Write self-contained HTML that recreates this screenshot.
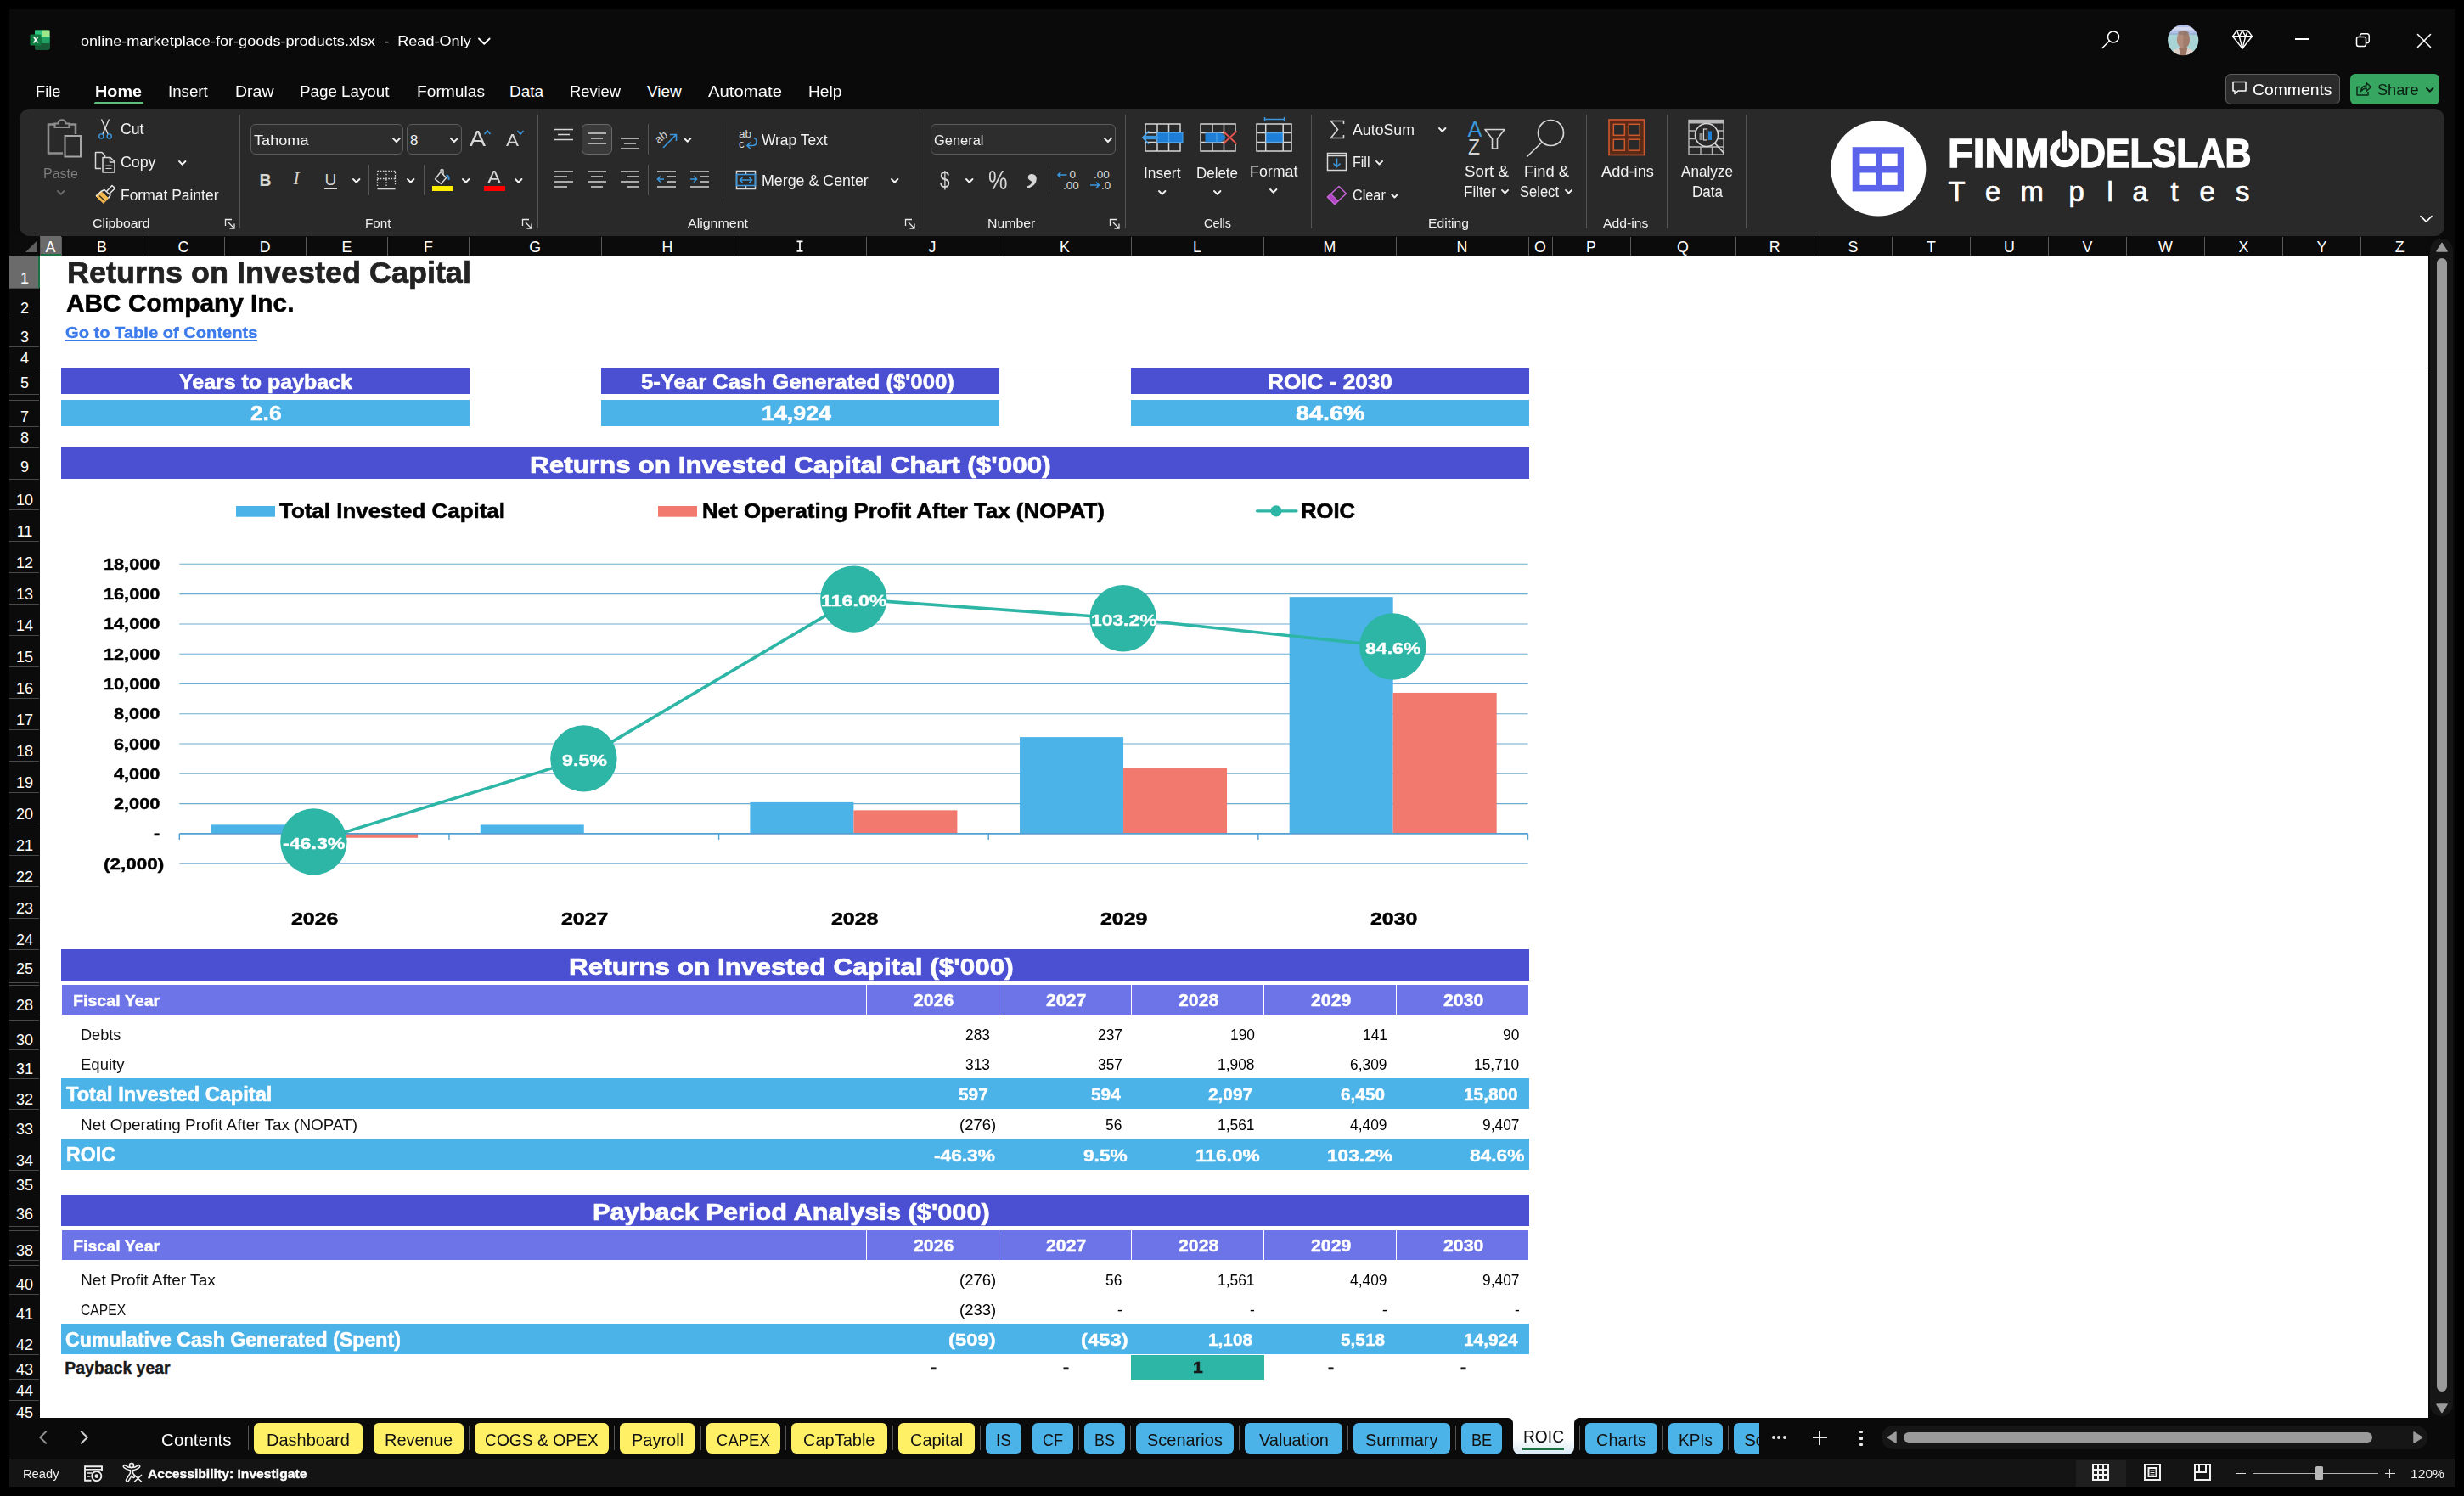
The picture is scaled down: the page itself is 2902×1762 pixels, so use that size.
<!DOCTYPE html>
<html><head><meta charset="utf-8"><title>ROIC</title>
<style>
html,body{margin:0;padding:0;background:#000;}
body{width:2902px;height:1762px;position:relative;overflow:hidden;font-family:"Liberation Sans",sans-serif;}
#win{position:absolute;left:11px;top:11px;width:2880px;height:1740px;background:#0a0a0a;}
.t{position:absolute;white-space:pre;transform-origin:0 0;}
.r{position:absolute;}
svg{overflow:visible}
</style></head><body><div id="win"></div>
<!-- sheet -->
<div class="r" style="left:47.0px;top:301.0px;width:2813.0px;height:1369.0px;background:#fff;"></div>
<div class="r" style="left:11.0px;top:278.0px;width:2849.0px;height:23.0px;background:#0b0b0b;"></div>
<svg class="r" style="left:28.0px;top:281.0px" width="18" height="18" viewBox="0 0 18 18"><path d="M16 2 L16 16 L2 16 Z" fill="#5f5f5f"/></svg>
<div class="r" style="left:47.0px;top:278.0px;width:25.0px;height:23.0px;background:#6b6b6b;"></div>
<div class="r" style="left:47.0px;top:299.0px;width:25.0px;height:2.0px;background:#1e7145;"></div>
<div class="r" style="left:71.5px;top:279.0px;width:1.0px;height:22.0px;background:#5a5a5a;"></div>
<span class="t" style="left:53.6px;top:282.8px;font-size:17.8px;line-height:17.8px;color:#fff;">A</span>
<div class="r" style="left:167.5px;top:279.0px;width:1.0px;height:22.0px;background:#5a5a5a;"></div>
<span class="t" style="left:114.1px;top:282.8px;font-size:17.8px;line-height:17.8px;color:#fff;">B</span>
<div class="r" style="left:263.5px;top:279.0px;width:1.0px;height:22.0px;background:#5a5a5a;"></div>
<span class="t" style="left:209.6px;top:282.8px;font-size:17.8px;line-height:17.8px;color:#fff;">C</span>
<div class="r" style="left:360.0px;top:279.0px;width:1.0px;height:22.0px;background:#5a5a5a;"></div>
<span class="t" style="left:305.8px;top:282.8px;font-size:17.8px;line-height:17.8px;color:#fff;">D</span>
<div class="r" style="left:456.0px;top:279.0px;width:1.0px;height:22.0px;background:#5a5a5a;"></div>
<span class="t" style="left:402.6px;top:282.8px;font-size:17.8px;line-height:17.8px;color:#fff;">E</span>
<div class="r" style="left:552.0px;top:279.0px;width:1.0px;height:22.0px;background:#5a5a5a;"></div>
<span class="t" style="left:499.1px;top:282.8px;font-size:17.8px;line-height:17.8px;color:#fff;">F</span>
<div class="r" style="left:707.5px;top:279.0px;width:1.0px;height:22.0px;background:#5a5a5a;"></div>
<span class="t" style="left:623.3px;top:282.8px;font-size:17.8px;line-height:17.8px;color:#fff;">G</span>
<div class="r" style="left:863.5px;top:279.0px;width:1.0px;height:22.0px;background:#5a5a5a;"></div>
<span class="t" style="left:779.6px;top:282.8px;font-size:17.8px;line-height:17.8px;color:#fff;">H</span>
<div class="r" style="left:1019.5px;top:279.0px;width:1.0px;height:22.0px;background:#5a5a5a;"></div>
<svg class="r" style="left:937.0px;top:283.0px" width="10" height="14" viewBox="0 0 10 14"><path d="M1.5 1.3 H8.5 M1.5 12.9 H8.5 M5 1.3 V12.9" stroke="#fff" stroke-width="1.7" fill="none"/></svg>
<div class="r" style="left:1175.5px;top:279.0px;width:1.0px;height:22.0px;background:#5a5a5a;"></div>
<span class="t" style="left:1093.5px;top:282.8px;font-size:17.8px;line-height:17.8px;color:#fff;">J</span>
<div class="r" style="left:1331.5px;top:279.0px;width:1.0px;height:22.0px;background:#5a5a5a;"></div>
<span class="t" style="left:1248.1px;top:282.8px;font-size:17.8px;line-height:17.8px;color:#fff;">K</span>
<div class="r" style="left:1487.5px;top:279.0px;width:1.0px;height:22.0px;background:#5a5a5a;"></div>
<span class="t" style="left:1405.1px;top:282.8px;font-size:17.8px;line-height:17.8px;color:#fff;">L</span>
<div class="r" style="left:1643.5px;top:279.0px;width:1.0px;height:22.0px;background:#5a5a5a;"></div>
<span class="t" style="left:1558.6px;top:282.8px;font-size:17.8px;line-height:17.8px;color:#fff;">M</span>
<div class="r" style="left:1799.5px;top:279.0px;width:1.0px;height:22.0px;background:#5a5a5a;"></div>
<span class="t" style="left:1715.6px;top:282.8px;font-size:17.8px;line-height:17.8px;color:#fff;">N</span>
<div class="r" style="left:1827.5px;top:279.0px;width:1.0px;height:22.0px;background:#5a5a5a;"></div>
<span class="t" style="left:1807.1px;top:282.8px;font-size:17.8px;line-height:17.8px;color:#fff;">O</span>
<div class="r" style="left:1919.5px;top:279.0px;width:1.0px;height:22.0px;background:#5a5a5a;"></div>
<span class="t" style="left:1868.1px;top:282.8px;font-size:17.8px;line-height:17.8px;color:#fff;">P</span>
<div class="r" style="left:2043.5px;top:279.0px;width:1.0px;height:22.0px;background:#5a5a5a;"></div>
<span class="t" style="left:1975.1px;top:282.8px;font-size:17.8px;line-height:17.8px;color:#fff;">Q</span>
<div class="r" style="left:2136.0px;top:279.0px;width:1.0px;height:22.0px;background:#5a5a5a;"></div>
<span class="t" style="left:2083.8px;top:282.8px;font-size:17.8px;line-height:17.8px;color:#fff;">R</span>
<div class="r" style="left:2228.0px;top:279.0px;width:1.0px;height:22.0px;background:#5a5a5a;"></div>
<span class="t" style="left:2176.6px;top:282.8px;font-size:17.8px;line-height:17.8px;color:#fff;">S</span>
<div class="r" style="left:2320.0px;top:279.0px;width:1.0px;height:22.0px;background:#5a5a5a;"></div>
<span class="t" style="left:2269.1px;top:282.8px;font-size:17.8px;line-height:17.8px;color:#fff;">T</span>
<div class="r" style="left:2412.0px;top:279.0px;width:1.0px;height:22.0px;background:#5a5a5a;"></div>
<span class="t" style="left:2360.1px;top:282.8px;font-size:17.8px;line-height:17.8px;color:#fff;">U</span>
<div class="r" style="left:2504.0px;top:279.0px;width:1.0px;height:22.0px;background:#5a5a5a;"></div>
<span class="t" style="left:2452.6px;top:282.8px;font-size:17.8px;line-height:17.8px;color:#fff;">V</span>
<div class="r" style="left:2596.0px;top:279.0px;width:1.0px;height:22.0px;background:#5a5a5a;"></div>
<span class="t" style="left:2542.1px;top:282.8px;font-size:17.8px;line-height:17.8px;color:#fff;">W</span>
<div class="r" style="left:2688.0px;top:279.0px;width:1.0px;height:22.0px;background:#5a5a5a;"></div>
<span class="t" style="left:2636.6px;top:282.8px;font-size:17.8px;line-height:17.8px;color:#fff;">X</span>
<div class="r" style="left:2780.0px;top:279.0px;width:1.0px;height:22.0px;background:#5a5a5a;"></div>
<span class="t" style="left:2728.6px;top:282.8px;font-size:17.8px;line-height:17.8px;color:#fff;">Y</span>
<div class="r" style="left:2859.5px;top:279.0px;width:1.0px;height:22.0px;background:#5a5a5a;"></div>
<span class="t" style="left:2820.8px;top:282.8px;font-size:17.8px;line-height:17.8px;color:#fff;">Z</span>
<div class="r" style="left:46.5px;top:279.0px;width:1.0px;height:22.0px;background:#5a5a5a;"></div>
<div class="r" style="left:11.0px;top:301.0px;width:36.0px;height:1369.0px;background:#0b0b0b;"></div>
<div class="r" style="left:11.0px;top:301.0px;width:36.0px;height:38.0px;background:#6b6b6b;"></div>
<div class="r" style="left:45.0px;top:301.0px;width:2.0px;height:38.0px;background:#1e7145;"></div>
<div class="r" style="left:11.0px;top:338.5px;width:35.0px;height:1.0px;background:#4a4a4a;"></div>
<span class="t" style="left:24.0px;top:318.5px;font-size:18px;line-height:18px;color:#fff;">1</span>
<div class="r" style="left:11.0px;top:373.5px;width:35.0px;height:1.0px;background:#4a4a4a;"></div>
<span class="t" style="left:24.0px;top:353.5px;font-size:18px;line-height:18px;color:#fff;">2</span>
<div class="r" style="left:11.0px;top:407.5px;width:35.0px;height:1.0px;background:#4a4a4a;"></div>
<span class="t" style="left:24.0px;top:387.5px;font-size:18px;line-height:18px;color:#fff;">3</span>
<div class="r" style="left:11.0px;top:432.5px;width:35.0px;height:1.0px;background:#4a4a4a;"></div>
<span class="t" style="left:24.0px;top:412.5px;font-size:18px;line-height:18px;color:#fff;">4</span>
<div class="r" style="left:11.0px;top:463.5px;width:35.0px;height:1.0px;background:#4a4a4a;"></div>
<span class="t" style="left:24.0px;top:442.0px;font-size:18px;line-height:18px;color:#fff;">5</span>
<div class="r" style="left:11.0px;top:501.5px;width:35.0px;height:1.0px;background:#4a4a4a;"></div>
<span class="t" style="left:24.0px;top:481.5px;font-size:18px;line-height:18px;color:#fff;">7</span>
<div class="r" style="left:11.0px;top:526.5px;width:35.0px;height:1.0px;background:#4a4a4a;"></div>
<span class="t" style="left:24.0px;top:506.5px;font-size:18px;line-height:18px;color:#fff;">8</span>
<div class="r" style="left:11.0px;top:563.5px;width:35.0px;height:1.0px;background:#4a4a4a;"></div>
<span class="t" style="left:24.0px;top:541.0px;font-size:18px;line-height:18px;color:#fff;">9</span>
<div class="r" style="left:11.0px;top:599.5px;width:35.0px;height:1.0px;background:#4a4a4a;"></div>
<span class="t" style="left:19.0px;top:579.5px;font-size:18px;line-height:18px;color:#fff;">10</span>
<div class="r" style="left:11.0px;top:636.5px;width:35.0px;height:1.0px;background:#4a4a4a;"></div>
<span class="t" style="left:19.7px;top:616.5px;font-size:18px;line-height:18px;color:#fff;">11</span>
<div class="r" style="left:11.0px;top:673.5px;width:35.0px;height:1.0px;background:#4a4a4a;"></div>
<span class="t" style="left:19.0px;top:653.5px;font-size:18px;line-height:18px;color:#fff;">12</span>
<div class="r" style="left:11.0px;top:710.5px;width:35.0px;height:1.0px;background:#4a4a4a;"></div>
<span class="t" style="left:19.0px;top:690.5px;font-size:18px;line-height:18px;color:#fff;">13</span>
<div class="r" style="left:11.0px;top:747.5px;width:35.0px;height:1.0px;background:#4a4a4a;"></div>
<span class="t" style="left:19.0px;top:727.5px;font-size:18px;line-height:18px;color:#fff;">14</span>
<div class="r" style="left:11.0px;top:784.5px;width:35.0px;height:1.0px;background:#4a4a4a;"></div>
<span class="t" style="left:19.0px;top:764.5px;font-size:18px;line-height:18px;color:#fff;">15</span>
<div class="r" style="left:11.0px;top:821.5px;width:35.0px;height:1.0px;background:#4a4a4a;"></div>
<span class="t" style="left:19.0px;top:801.5px;font-size:18px;line-height:18px;color:#fff;">16</span>
<div class="r" style="left:11.0px;top:858.5px;width:35.0px;height:1.0px;background:#4a4a4a;"></div>
<span class="t" style="left:19.0px;top:838.5px;font-size:18px;line-height:18px;color:#fff;">17</span>
<div class="r" style="left:11.0px;top:895.5px;width:35.0px;height:1.0px;background:#4a4a4a;"></div>
<span class="t" style="left:19.0px;top:875.5px;font-size:18px;line-height:18px;color:#fff;">18</span>
<div class="r" style="left:11.0px;top:932.5px;width:35.0px;height:1.0px;background:#4a4a4a;"></div>
<span class="t" style="left:19.0px;top:912.5px;font-size:18px;line-height:18px;color:#fff;">19</span>
<div class="r" style="left:11.0px;top:969.5px;width:35.0px;height:1.0px;background:#4a4a4a;"></div>
<span class="t" style="left:19.0px;top:949.5px;font-size:18px;line-height:18px;color:#fff;">20</span>
<div class="r" style="left:11.0px;top:1006.5px;width:35.0px;height:1.0px;background:#4a4a4a;"></div>
<span class="t" style="left:19.0px;top:986.5px;font-size:18px;line-height:18px;color:#fff;">21</span>
<div class="r" style="left:11.0px;top:1043.5px;width:35.0px;height:1.0px;background:#4a4a4a;"></div>
<span class="t" style="left:19.0px;top:1023.5px;font-size:18px;line-height:18px;color:#fff;">22</span>
<div class="r" style="left:11.0px;top:1080.5px;width:35.0px;height:1.0px;background:#4a4a4a;"></div>
<span class="t" style="left:19.0px;top:1060.5px;font-size:18px;line-height:18px;color:#fff;">23</span>
<div class="r" style="left:11.0px;top:1117.5px;width:35.0px;height:1.0px;background:#4a4a4a;"></div>
<span class="t" style="left:19.0px;top:1097.5px;font-size:18px;line-height:18px;color:#fff;">24</span>
<div class="r" style="left:11.0px;top:1154.5px;width:35.0px;height:1.0px;background:#4a4a4a;"></div>
<span class="t" style="left:19.0px;top:1132.0px;font-size:18px;line-height:18px;color:#fff;">25</span>
<div class="r" style="left:11.0px;top:1194.5px;width:35.0px;height:1.0px;background:#4a4a4a;"></div>
<span class="t" style="left:19.0px;top:1174.5px;font-size:18px;line-height:18px;color:#fff;">28</span>
<div class="r" style="left:11.0px;top:1235.5px;width:35.0px;height:1.0px;background:#4a4a4a;"></div>
<span class="t" style="left:19.0px;top:1215.5px;font-size:18px;line-height:18px;color:#fff;">30</span>
<div class="r" style="left:11.0px;top:1269.5px;width:35.0px;height:1.0px;background:#4a4a4a;"></div>
<span class="t" style="left:19.0px;top:1249.5px;font-size:18px;line-height:18px;color:#fff;">31</span>
<div class="r" style="left:11.0px;top:1305.5px;width:35.0px;height:1.0px;background:#4a4a4a;"></div>
<span class="t" style="left:19.0px;top:1285.5px;font-size:18px;line-height:18px;color:#fff;">32</span>
<div class="r" style="left:11.0px;top:1340.5px;width:35.0px;height:1.0px;background:#4a4a4a;"></div>
<span class="t" style="left:19.0px;top:1320.5px;font-size:18px;line-height:18px;color:#fff;">33</span>
<div class="r" style="left:11.0px;top:1377.5px;width:35.0px;height:1.0px;background:#4a4a4a;"></div>
<span class="t" style="left:19.0px;top:1357.5px;font-size:18px;line-height:18px;color:#fff;">34</span>
<div class="r" style="left:11.0px;top:1406.5px;width:35.0px;height:1.0px;background:#4a4a4a;"></div>
<span class="t" style="left:19.0px;top:1386.5px;font-size:18px;line-height:18px;color:#fff;">35</span>
<div class="r" style="left:11.0px;top:1443.5px;width:35.0px;height:1.0px;background:#4a4a4a;"></div>
<span class="t" style="left:19.0px;top:1421.0px;font-size:18px;line-height:18px;color:#fff;">36</span>
<div class="r" style="left:11.0px;top:1483.5px;width:35.0px;height:1.0px;background:#4a4a4a;"></div>
<span class="t" style="left:19.0px;top:1463.5px;font-size:18px;line-height:18px;color:#fff;">38</span>
<div class="r" style="left:11.0px;top:1523.5px;width:35.0px;height:1.0px;background:#4a4a4a;"></div>
<span class="t" style="left:19.0px;top:1503.5px;font-size:18px;line-height:18px;color:#fff;">40</span>
<div class="r" style="left:11.0px;top:1558.5px;width:35.0px;height:1.0px;background:#4a4a4a;"></div>
<span class="t" style="left:19.0px;top:1538.5px;font-size:18px;line-height:18px;color:#fff;">41</span>
<div class="r" style="left:11.0px;top:1594.5px;width:35.0px;height:1.0px;background:#4a4a4a;"></div>
<span class="t" style="left:19.0px;top:1574.5px;font-size:18px;line-height:18px;color:#fff;">42</span>
<div class="r" style="left:11.0px;top:1623.5px;width:35.0px;height:1.0px;background:#4a4a4a;"></div>
<span class="t" style="left:19.0px;top:1603.5px;font-size:18px;line-height:18px;color:#fff;">43</span>
<div class="r" style="left:11.0px;top:1648.5px;width:35.0px;height:1.0px;background:#4a4a4a;"></div>
<span class="t" style="left:19.0px;top:1628.5px;font-size:18px;line-height:18px;color:#fff;">44</span>
<div class="r" style="left:11.0px;top:1669.5px;width:35.0px;height:1.0px;background:#4a4a4a;"></div>
<span class="t" style="left:19.0px;top:1654.6px;font-size:18px;line-height:18px;color:#fff;">45</span>
<div class="r" style="left:11.0px;top:463.5px;width:35.0px;height:1.0px;background:#4a4a4a;"></div>
<div class="r" style="left:11.0px;top:470.5px;width:35.0px;height:1.0px;background:#4a4a4a;"></div>
<div class="r" style="left:11.0px;top:1154.5px;width:35.0px;height:1.0px;background:#4a4a4a;"></div>
<div class="r" style="left:11.0px;top:1157.0px;width:35.0px;height:1.0px;background:#4a4a4a;"></div>
<div class="r" style="left:11.0px;top:1159.5px;width:35.0px;height:1.0px;background:#4a4a4a;"></div>
<div class="r" style="left:11.0px;top:1194.5px;width:35.0px;height:1.0px;background:#4a4a4a;"></div>
<div class="r" style="left:11.0px;top:1200.5px;width:35.0px;height:1.0px;background:#4a4a4a;"></div>
<div class="r" style="left:11.0px;top:1443.5px;width:35.0px;height:1.0px;background:#4a4a4a;"></div>
<div class="r" style="left:11.0px;top:1448.5px;width:35.0px;height:1.0px;background:#4a4a4a;"></div>
<div class="r" style="left:11.0px;top:1483.5px;width:35.0px;height:1.0px;background:#4a4a4a;"></div>
<div class="r" style="left:11.0px;top:1489.5px;width:35.0px;height:1.0px;background:#4a4a4a;"></div>
<div class="r" style="left:47.0px;top:432.6px;width:2813.0px;height:1.2px;background:#9c9c9c;"></div>
<span class="t" style="left:79.2px;top:303.6px;font-size:34.79px;line-height:34.79px;color:#222;font-weight:700;transform:scaleX(1.0346);-webkit-text-stroke:0.70px #222;">Returns on Invested Capital</span>
<span class="t" style="left:78.0px;top:342.7px;font-size:29.15px;line-height:29.15px;color:#000;font-weight:700;transform:scaleX(1.0234);-webkit-text-stroke:0.58px #000;">ABC Company Inc.</span>
<span class="t" style="left:76.5px;top:383.0px;font-size:18.66px;line-height:18.66px;color:#3b7bec;font-weight:700;transform:scaleX(1.0781);-webkit-text-stroke:0.37px #3b7bec;">Go to Table of Contents</span>
<div class="r" style="left:76.0px;top:399.5px;width:227.0px;height:2.2px;background:#3b7bec;"></div>
<div class="r" style="left:72.0px;top:433.6px;width:481.0px;height:30.1px;background:#4b4fd1;"></div>
<div class="r" style="left:72.2px;top:470.9px;width:481.0px;height:31.1px;background:#4bb3e8;"></div>
<span class="t" style="left:211.0px;top:438.5px;font-size:23.64px;line-height:23.64px;color:#fff;font-weight:700;transform:scaleX(1.0561);-webkit-text-stroke:0.59px #fff;">Years to payback</span>
<span class="t" style="left:295.2px;top:475.0px;font-size:24.12px;line-height:24.12px;color:#fff;font-weight:700;transform:scaleX(1.0886);-webkit-text-stroke:0.60px #fff;">2.6</span>
<div class="r" style="left:708.0px;top:433.6px;width:468.5px;height:30.1px;background:#4b4fd1;"></div>
<div class="r" style="left:708.2px;top:470.9px;width:468.5px;height:31.1px;background:#4bb3e8;"></div>
<span class="t" style="left:754.8px;top:438.5px;font-size:23.64px;line-height:23.64px;color:#fff;font-weight:700;transform:scaleX(1.0873);-webkit-text-stroke:0.59px #fff;">5-Year Cash Generated ($&#x27;000)</span>
<span class="t" style="left:897.0px;top:475.0px;font-size:24.12px;line-height:24.12px;color:#fff;font-weight:700;transform:scaleX(1.1115);-webkit-text-stroke:0.60px #fff;">14,924</span>
<div class="r" style="left:1332.0px;top:433.6px;width:469.0px;height:30.1px;background:#4b4fd1;"></div>
<div class="r" style="left:1332.2px;top:470.9px;width:469.0px;height:31.1px;background:#4bb3e8;"></div>
<span class="t" style="left:1492.5px;top:438.5px;font-size:23.64px;line-height:23.64px;color:#fff;font-weight:700;transform:scaleX(1.1078);-webkit-text-stroke:0.59px #fff;">ROIC - 2030</span>
<span class="t" style="left:1525.5px;top:475.0px;font-size:24.12px;line-height:24.12px;color:#fff;font-weight:700;transform:scaleX(1.1917);-webkit-text-stroke:0.60px #fff;">84.6%</span>
<div class="r" style="left:72.0px;top:527.2px;width:1729.0px;height:36.8px;background:#4b4fd1;"></div>
<span class="t" style="left:624.0px;top:533.0px;font-size:28.56px;line-height:28.56px;color:#fff;font-weight:700;transform:scaleX(1.1013);-webkit-text-stroke:0.71px #fff;">Returns on Invested Capital Chart ($&#x27;000)</span>
<div class="r" style="left:72.0px;top:1118.0px;width:1729.0px;height:36.8px;background:#4b4fd1;"></div>
<span class="t" style="left:670.0px;top:1123.5px;font-size:28.56px;line-height:28.56px;color:#fff;font-weight:700;transform:scaleX(1.1031);-webkit-text-stroke:0.71px #fff;">Returns on Invested Capital ($&#x27;000)</span>
<div class="r" style="left:72.0px;top:1407.0px;width:1729.0px;height:37.0px;background:#4b4fd1;"></div>
<span class="t" style="left:698.0px;top:1412.8px;font-size:28.56px;line-height:28.56px;color:#fff;font-weight:700;transform:scaleX(1.0774);-webkit-text-stroke:0.71px #fff;">Payback Period Analysis ($&#x27;000)</span>
<!-- chart -->
<svg class="r" style="left:0;top:0" width="2902" height="1762" viewBox="0 0 2902 1762"><line x1="211.3" y1="1017.18" x2="1799.5" y2="1017.18" stroke="#6eadd0" stroke-width="1.05"/><line x1="211.3" y1="946.62" x2="1799.5" y2="946.62" stroke="#6eadd0" stroke-width="1.05"/><line x1="211.3" y1="911.33" x2="1799.5" y2="911.33" stroke="#6eadd0" stroke-width="1.05"/><line x1="211.3" y1="876.04" x2="1799.5" y2="876.04" stroke="#6eadd0" stroke-width="1.05"/><line x1="211.3" y1="840.76" x2="1799.5" y2="840.76" stroke="#6eadd0" stroke-width="1.05"/><line x1="211.3" y1="805.48" x2="1799.5" y2="805.48" stroke="#6eadd0" stroke-width="1.05"/><line x1="211.3" y1="770.19" x2="1799.5" y2="770.19" stroke="#6eadd0" stroke-width="1.05"/><line x1="211.3" y1="734.90" x2="1799.5" y2="734.90" stroke="#6eadd0" stroke-width="1.05"/><line x1="211.3" y1="699.62" x2="1799.5" y2="699.62" stroke="#6eadd0" stroke-width="1.05"/><line x1="211.3" y1="664.34" x2="1799.5" y2="664.34" stroke="#6eadd0" stroke-width="1.05"/><rect x="248.12" y="971.37" width="122.0" height="10.53" fill="#4bb3e8"/><rect x="370.12" y="981.90" width="122.0" height="4.87" fill="#f1796e"/><rect x="565.76" y="971.42" width="122.0" height="10.48" fill="#4bb3e8"/><rect x="883.40" y="944.90" width="122.0" height="37.00" fill="#4bb3e8"/><rect x="1005.40" y="954.36" width="122.0" height="27.54" fill="#f1796e"/><rect x="1201.04" y="868.11" width="122.0" height="113.79" fill="#4bb3e8"/><rect x="1323.04" y="904.11" width="122.0" height="77.79" fill="#f1796e"/><rect x="1518.68" y="703.15" width="122.0" height="278.75" fill="#4bb3e8"/><rect x="1640.68" y="815.94" width="122.0" height="165.96" fill="#f1796e"/><line x1="211.3" y1="981.9" x2="1799.5" y2="981.9" stroke="#559fd0" stroke-width="1.8"/><line x1="211.30" y1="981.9" x2="211.30" y2="988.9" stroke="#559fd0" stroke-width="1.4"/><line x1="528.94" y1="981.9" x2="528.94" y2="988.9" stroke="#559fd0" stroke-width="1.4"/><line x1="846.58" y1="981.9" x2="846.58" y2="988.9" stroke="#559fd0" stroke-width="1.4"/><line x1="1164.22" y1="981.9" x2="1164.22" y2="988.9" stroke="#559fd0" stroke-width="1.4"/><line x1="1481.86" y1="981.9" x2="1481.86" y2="988.9" stroke="#559fd0" stroke-width="1.4"/><line x1="1799.50" y1="981.9" x2="1799.50" y2="988.9" stroke="#559fd0" stroke-width="1.4"/><polyline points="369.4,991.4 687.4,893.4 1005.3,705.6 1322.7,728.3 1640.3,761.5" fill="none" stroke="#2db5a6" stroke-width="3.6" stroke-linejoin="round"/><circle cx="369.4" cy="991.4" r="39.2" fill="#2db5a6"/><circle cx="687.4" cy="893.4" r="39.2" fill="#2db5a6"/><circle cx="1005.3" cy="705.6" r="39.2" fill="#2db5a6"/><circle cx="1322.7" cy="728.3" r="39.2" fill="#2db5a6"/><circle cx="1640.3" cy="761.5" r="39.2" fill="#2db5a6"/><rect x="278" y="596" width="46" height="12.7" fill="#4bb3e8"/><rect x="775" y="596" width="46" height="12.7" fill="#f1796e"/><line x1="1480.5" y1="601.8" x2="1527" y2="601.8" stroke="#2db5a6" stroke-width="3.2" stroke-linecap="round"/><circle cx="1503" cy="601.8" r="6.6" fill="#2db5a6"/></svg>
<span class="t" style="left:122.4px;top:1008.7px;font-size:18.14px;line-height:18.14px;color:#000;font-weight:700;transform:scaleX(1.2385);-webkit-text-stroke:0.45px #000;">(2,000)</span>
<span class="t" style="left:181.1px;top:973.4px;font-size:18.14px;line-height:18.14px;color:#000;font-weight:700;transform:scaleX(1.1958);-webkit-text-stroke:0.45px #000;">-</span>
<span class="t" style="left:134.0px;top:938.1px;font-size:18.14px;line-height:18.14px;color:#000;font-weight:700;transform:scaleX(1.1963);-webkit-text-stroke:0.45px #000;">2,000</span>
<span class="t" style="left:134.0px;top:902.8px;font-size:18.14px;line-height:18.14px;color:#000;font-weight:700;transform:scaleX(1.1963);-webkit-text-stroke:0.45px #000;">4,000</span>
<span class="t" style="left:134.0px;top:867.5px;font-size:18.14px;line-height:18.14px;color:#000;font-weight:700;transform:scaleX(1.1963);-webkit-text-stroke:0.45px #000;">6,000</span>
<span class="t" style="left:134.0px;top:832.3px;font-size:18.14px;line-height:18.14px;color:#000;font-weight:700;transform:scaleX(1.1963);-webkit-text-stroke:0.45px #000;">8,000</span>
<span class="t" style="left:121.9px;top:797.0px;font-size:18.14px;line-height:18.14px;color:#000;font-weight:700;transform:scaleX(1.1963);-webkit-text-stroke:0.45px #000;">10,000</span>
<span class="t" style="left:121.9px;top:761.7px;font-size:18.14px;line-height:18.14px;color:#000;font-weight:700;transform:scaleX(1.1963);-webkit-text-stroke:0.45px #000;">12,000</span>
<span class="t" style="left:121.9px;top:726.4px;font-size:18.14px;line-height:18.14px;color:#000;font-weight:700;transform:scaleX(1.1963);-webkit-text-stroke:0.45px #000;">14,000</span>
<span class="t" style="left:121.9px;top:691.1px;font-size:18.14px;line-height:18.14px;color:#000;font-weight:700;transform:scaleX(1.1963);-webkit-text-stroke:0.45px #000;">16,000</span>
<span class="t" style="left:121.9px;top:655.8px;font-size:18.14px;line-height:18.14px;color:#000;font-weight:700;transform:scaleX(1.1963);-webkit-text-stroke:0.45px #000;">18,000</span>
<span class="t" style="left:343.4px;top:1071.6px;font-size:20.55px;line-height:20.55px;color:#000;font-weight:700;transform:scaleX(1.2139);-webkit-text-stroke:0.51px #000;">2026</span>
<span class="t" style="left:661.0px;top:1071.6px;font-size:20.55px;line-height:20.55px;color:#000;font-weight:700;transform:scaleX(1.2139);-webkit-text-stroke:0.51px #000;">2027</span>
<span class="t" style="left:978.6px;top:1071.6px;font-size:20.55px;line-height:20.55px;color:#000;font-weight:700;transform:scaleX(1.2139);-webkit-text-stroke:0.51px #000;">2028</span>
<span class="t" style="left:1296.3px;top:1071.6px;font-size:20.55px;line-height:20.55px;color:#000;font-weight:700;transform:scaleX(1.2139);-webkit-text-stroke:0.51px #000;">2029</span>
<span class="t" style="left:1613.9px;top:1071.6px;font-size:20.55px;line-height:20.55px;color:#000;font-weight:700;transform:scaleX(1.2139);-webkit-text-stroke:0.51px #000;">2030</span>
<span class="t" style="left:333.4px;top:984.9px;font-size:18.27px;line-height:18.27px;color:#fff;font-weight:700;transform:scaleX(1.2698);-webkit-text-stroke:0.37px #fff;">-46.3%</span>
<span class="t" style="left:661.7px;top:886.9px;font-size:18.27px;line-height:18.27px;color:#fff;font-weight:700;transform:scaleX(1.2728);-webkit-text-stroke:0.37px #fff;">9.5%</span>
<span class="t" style="left:967.3px;top:699.1px;font-size:18.27px;line-height:18.27px;color:#fff;font-weight:700;transform:scaleX(1.2715);-webkit-text-stroke:0.37px #fff;">116.0%</span>
<span class="t" style="left:1284.8px;top:721.8px;font-size:18.27px;line-height:18.27px;color:#fff;font-weight:700;transform:scaleX(1.2508);-webkit-text-stroke:0.37px #fff;">103.2%</span>
<span class="t" style="left:1608.3px;top:755.0px;font-size:18.27px;line-height:18.27px;color:#fff;font-weight:700;transform:scaleX(1.2645);-webkit-text-stroke:0.37px #fff;">84.6%</span>
<span class="t" style="left:328.7px;top:590.9px;font-size:23.74px;line-height:23.74px;color:#000;font-weight:700;transform:scaleX(1.0920);-webkit-text-stroke:0.59px #000;">Total Invested Capital</span>
<span class="t" style="left:826.5px;top:590.9px;font-size:23.74px;line-height:23.74px;color:#000;font-weight:700;transform:scaleX(1.0913);-webkit-text-stroke:0.59px #000;">Net Operating Profit After Tax (NOPAT)</span>
<span class="t" style="left:1532.3px;top:590.9px;font-size:23.74px;line-height:23.74px;color:#000;font-weight:700;transform:scaleX(1.0783);-webkit-text-stroke:0.59px #000;">ROIC</span>
<!-- tables -->
<div class="r" style="left:73.0px;top:1160.0px;width:1727.3px;height:34.7px;background:#6d74e8;"></div>
<div class="r" style="left:1019.7px;top:1160.0px;width:1.2px;height:34.7px;background:#fff;"></div>
<div class="r" style="left:1175.8px;top:1160.0px;width:1.2px;height:34.7px;background:#fff;"></div>
<div class="r" style="left:1332.0px;top:1160.0px;width:1.2px;height:34.7px;background:#fff;"></div>
<div class="r" style="left:1488.1px;top:1160.0px;width:1.2px;height:34.7px;background:#fff;"></div>
<div class="r" style="left:1643.5px;top:1160.0px;width:1.2px;height:34.7px;background:#fff;"></div>
<span class="t" style="left:85.6px;top:1169.6px;font-size:18.66px;line-height:18.66px;color:#fff;font-weight:700;transform:scaleX(1.0525);-webkit-text-stroke:0.37px #fff;">Fiscal Year</span>
<span class="t" style="left:1075.6px;top:1168.6px;font-size:19.44px;line-height:19.44px;color:#fff;font-weight:700;transform:scaleX(1.0939);-webkit-text-stroke:0.39px #fff;">2026</span>
<span class="t" style="left:1231.6px;top:1168.6px;font-size:19.44px;line-height:19.44px;color:#fff;font-weight:700;transform:scaleX(1.0939);-webkit-text-stroke:0.39px #fff;">2027</span>
<span class="t" style="left:1387.6px;top:1168.6px;font-size:19.44px;line-height:19.44px;color:#fff;font-weight:700;transform:scaleX(1.0939);-webkit-text-stroke:0.39px #fff;">2028</span>
<span class="t" style="left:1543.6px;top:1168.6px;font-size:19.44px;line-height:19.44px;color:#fff;font-weight:700;transform:scaleX(1.0939);-webkit-text-stroke:0.39px #fff;">2029</span>
<span class="t" style="left:1699.6px;top:1168.6px;font-size:19.44px;line-height:19.44px;color:#fff;font-weight:700;transform:scaleX(1.0939);-webkit-text-stroke:0.39px #fff;">2030</span>
<span class="t" style="left:94.7px;top:1209.8px;font-size:18.8px;line-height:18.8px;color:#111;transform:scaleX(0.9671);">Debts</span>
<span class="t" style="left:94.7px;top:1244.6px;font-size:18.8px;line-height:18.8px;color:#111;transform:scaleX(0.9855);">Equity</span>
<span class="t" style="left:1136.6px;top:1209.8px;font-size:18.8px;line-height:18.8px;color:#000;transform:scaleX(0.9250);">283</span>
<span class="t" style="left:1292.6px;top:1209.8px;font-size:18.8px;line-height:18.8px;color:#000;transform:scaleX(0.9250);">237</span>
<span class="t" style="left:1448.6px;top:1209.8px;font-size:18.8px;line-height:18.8px;color:#000;transform:scaleX(0.9250);">190</span>
<span class="t" style="left:1604.6px;top:1209.8px;font-size:18.8px;line-height:18.8px;color:#000;transform:scaleX(0.9250);">141</span>
<span class="t" style="left:1770.3px;top:1209.8px;font-size:18.8px;line-height:18.8px;color:#000;transform:scaleX(0.9250);">90</span>
<span class="t" style="left:1136.6px;top:1244.6px;font-size:18.8px;line-height:18.8px;color:#000;transform:scaleX(0.9250);">313</span>
<span class="t" style="left:1292.6px;top:1244.6px;font-size:18.8px;line-height:18.8px;color:#000;transform:scaleX(0.9250);">357</span>
<span class="t" style="left:1434.1px;top:1244.6px;font-size:18.8px;line-height:18.8px;color:#000;transform:scaleX(0.9250);">1,908</span>
<span class="t" style="left:1590.1px;top:1244.6px;font-size:18.8px;line-height:18.8px;color:#000;transform:scaleX(0.9250);">6,309</span>
<span class="t" style="left:1736.4px;top:1244.6px;font-size:18.8px;line-height:18.8px;color:#000;transform:scaleX(0.9250);">15,710</span>
<div class="r" style="left:72.0px;top:1270.0px;width:1729.0px;height:36.4px;background:#4bb3e8;"></div>
<span class="t" style="left:77.7px;top:1278.0px;font-size:23.35px;line-height:23.35px;color:#fff;font-weight:700;transform:scaleX(1.0121);-webkit-text-stroke:0.58px #fff;">Total Invested Capital</span>
<span class="t" style="left:1128.6px;top:1280.3px;font-size:19.63px;line-height:19.63px;color:#fff;font-weight:700;transform:scaleX(1.0619);-webkit-text-stroke:0.39px #fff;">597</span>
<span class="t" style="left:1284.6px;top:1280.3px;font-size:19.63px;line-height:19.63px;color:#fff;font-weight:700;transform:scaleX(1.0619);-webkit-text-stroke:0.39px #fff;">594</span>
<span class="t" style="left:1423.2px;top:1280.3px;font-size:19.63px;line-height:19.63px;color:#fff;font-weight:700;transform:scaleX(1.0619);-webkit-text-stroke:0.39px #fff;">2,097</span>
<span class="t" style="left:1579.2px;top:1280.3px;font-size:19.63px;line-height:19.63px;color:#fff;font-weight:700;transform:scaleX(1.0619);-webkit-text-stroke:0.39px #fff;">6,450</span>
<span class="t" style="left:1723.6px;top:1280.3px;font-size:19.63px;line-height:19.63px;color:#fff;font-weight:700;transform:scaleX(1.0619);-webkit-text-stroke:0.39px #fff;">15,800</span>
<span class="t" style="left:94.7px;top:1315.8px;font-size:18.8px;line-height:18.8px;color:#111;transform:scaleX(1.0080);">Net Operating Profit After Tax (NOPAT)</span>
<span class="t" style="left:1129.6px;top:1315.8px;font-size:18.8px;line-height:18.8px;color:#000;transform:scaleX(0.9851);">(276)</span>
<span class="t" style="left:1302.3px;top:1315.8px;font-size:18.8px;line-height:18.8px;color:#000;transform:scaleX(0.9250);">56</span>
<span class="t" style="left:1434.1px;top:1315.8px;font-size:18.8px;line-height:18.8px;color:#000;transform:scaleX(0.9250);">1,561</span>
<span class="t" style="left:1590.1px;top:1315.8px;font-size:18.8px;line-height:18.8px;color:#000;transform:scaleX(0.9250);">4,409</span>
<span class="t" style="left:1746.1px;top:1315.8px;font-size:18.8px;line-height:18.8px;color:#000;transform:scaleX(0.9250);">9,407</span>
<div class="r" style="left:72.0px;top:1341.3px;width:1729.0px;height:36.5px;background:#4bb3e8;"></div>
<span class="t" style="left:78.2px;top:1349.2px;font-size:23.35px;line-height:23.35px;color:#fff;font-weight:700;transform:scaleX(0.9936);-webkit-text-stroke:0.58px #fff;">ROIC</span>
<span class="t" style="left:1099.7px;top:1351.5px;font-size:19.63px;line-height:19.63px;color:#fff;font-weight:700;transform:scaleX(1.1565);-webkit-text-stroke:0.39px #fff;">-46.3%</span>
<span class="t" style="left:1275.9px;top:1351.5px;font-size:19.63px;line-height:19.63px;color:#fff;font-weight:700;transform:scaleX(1.1565);-webkit-text-stroke:0.39px #fff;">9.5%</span>
<span class="t" style="left:1407.9px;top:1351.5px;font-size:19.63px;line-height:19.63px;color:#fff;font-weight:700;transform:scaleX(1.1565);-webkit-text-stroke:0.39px #fff;">116.0%</span>
<span class="t" style="left:1562.6px;top:1351.5px;font-size:19.63px;line-height:19.63px;color:#fff;font-weight:700;transform:scaleX(1.1565);-webkit-text-stroke:0.39px #fff;">103.2%</span>
<span class="t" style="left:1731.2px;top:1351.5px;font-size:19.63px;line-height:19.63px;color:#fff;font-weight:700;transform:scaleX(1.1565);-webkit-text-stroke:0.39px #fff;">84.6%</span>
<div class="r" style="left:73.0px;top:1449.1px;width:1727.3px;height:34.7px;background:#6d74e8;"></div>
<div class="r" style="left:1019.7px;top:1449.1px;width:1.2px;height:34.7px;background:#fff;"></div>
<div class="r" style="left:1175.8px;top:1449.1px;width:1.2px;height:34.7px;background:#fff;"></div>
<div class="r" style="left:1332.0px;top:1449.1px;width:1.2px;height:34.7px;background:#fff;"></div>
<div class="r" style="left:1488.1px;top:1449.1px;width:1.2px;height:34.7px;background:#fff;"></div>
<div class="r" style="left:1643.5px;top:1449.1px;width:1.2px;height:34.7px;background:#fff;"></div>
<span class="t" style="left:85.6px;top:1458.7px;font-size:18.66px;line-height:18.66px;color:#fff;font-weight:700;transform:scaleX(1.0525);-webkit-text-stroke:0.37px #fff;">Fiscal Year</span>
<span class="t" style="left:1075.6px;top:1457.7px;font-size:19.44px;line-height:19.44px;color:#fff;font-weight:700;transform:scaleX(1.0939);-webkit-text-stroke:0.39px #fff;">2026</span>
<span class="t" style="left:1231.6px;top:1457.7px;font-size:19.44px;line-height:19.44px;color:#fff;font-weight:700;transform:scaleX(1.0939);-webkit-text-stroke:0.39px #fff;">2027</span>
<span class="t" style="left:1387.6px;top:1457.7px;font-size:19.44px;line-height:19.44px;color:#fff;font-weight:700;transform:scaleX(1.0939);-webkit-text-stroke:0.39px #fff;">2028</span>
<span class="t" style="left:1543.6px;top:1457.7px;font-size:19.44px;line-height:19.44px;color:#fff;font-weight:700;transform:scaleX(1.0939);-webkit-text-stroke:0.39px #fff;">2029</span>
<span class="t" style="left:1699.6px;top:1457.7px;font-size:19.44px;line-height:19.44px;color:#fff;font-weight:700;transform:scaleX(1.0939);-webkit-text-stroke:0.39px #fff;">2030</span>
<span class="t" style="left:94.5px;top:1499.1px;font-size:18.8px;line-height:18.8px;color:#111;transform:scaleX(1.0166);">Net Profit After Tax</span>
<span class="t" style="left:94.5px;top:1533.8px;font-size:18.8px;line-height:18.8px;color:#111;transform:scaleX(0.8346);">CAPEX</span>
<span class="t" style="left:1129.6px;top:1499.1px;font-size:18.8px;line-height:18.8px;color:#000;transform:scaleX(0.9851);">(276)</span>
<span class="t" style="left:1302.3px;top:1499.1px;font-size:18.8px;line-height:18.8px;color:#000;transform:scaleX(0.9250);">56</span>
<span class="t" style="left:1434.1px;top:1499.1px;font-size:18.8px;line-height:18.8px;color:#000;transform:scaleX(0.9250);">1,561</span>
<span class="t" style="left:1590.1px;top:1499.1px;font-size:18.8px;line-height:18.8px;color:#000;transform:scaleX(0.9250);">4,409</span>
<span class="t" style="left:1746.1px;top:1499.1px;font-size:18.8px;line-height:18.8px;color:#000;transform:scaleX(0.9250);">9,407</span>
<span class="t" style="left:1129.6px;top:1533.8px;font-size:18.8px;line-height:18.8px;color:#000;transform:scaleX(0.9851);">(233)</span>
<span class="t" style="left:1316.0px;top:1533.8px;font-size:18.8px;line-height:18.8px;color:#000;transform:scaleX(0.9250);">-</span>
<span class="t" style="left:1472.0px;top:1533.8px;font-size:18.8px;line-height:18.8px;color:#000;transform:scaleX(0.9250);">-</span>
<span class="t" style="left:1628.0px;top:1533.8px;font-size:18.8px;line-height:18.8px;color:#000;transform:scaleX(0.9250);">-</span>
<span class="t" style="left:1784.0px;top:1533.8px;font-size:18.8px;line-height:18.8px;color:#000;transform:scaleX(0.9250);">-</span>
<div class="r" style="left:72.0px;top:1558.8px;width:1729.0px;height:36.0px;background:#4bb3e8;"></div>
<span class="t" style="left:77.3px;top:1567.0px;font-size:23.35px;line-height:23.35px;color:#fff;font-weight:700;transform:scaleX(0.9916);-webkit-text-stroke:0.58px #fff;">Cumulative Cash Generated (Spent)</span>
<span class="t" style="left:1117.1px;top:1569.4px;font-size:19.63px;line-height:19.63px;color:#fff;font-weight:700;transform:scaleX(1.2158);-webkit-text-stroke:0.39px #fff;">(509)</span>
<span class="t" style="left:1273.1px;top:1569.4px;font-size:19.63px;line-height:19.63px;color:#fff;font-weight:700;transform:scaleX(1.2158);-webkit-text-stroke:0.39px #fff;">(453)</span>
<span class="t" style="left:1423.2px;top:1569.4px;font-size:19.63px;line-height:19.63px;color:#fff;font-weight:700;transform:scaleX(1.0619);-webkit-text-stroke:0.39px #fff;">1,108</span>
<span class="t" style="left:1579.2px;top:1569.4px;font-size:19.63px;line-height:19.63px;color:#fff;font-weight:700;transform:scaleX(1.0619);-webkit-text-stroke:0.39px #fff;">5,518</span>
<span class="t" style="left:1723.6px;top:1569.4px;font-size:19.63px;line-height:19.63px;color:#fff;font-weight:700;transform:scaleX(1.0619);-webkit-text-stroke:0.39px #fff;">14,924</span>
<span class="t" style="left:76.3px;top:1601.5px;font-size:19.44px;line-height:19.44px;color:#1a1a1a;font-weight:700;-webkit-text-stroke:0.39px #1a1a1a;">Payback year</span>
<div class="r" style="left:1331.8px;top:1596.0px;width:157.2px;height:28.7px;background:#2db5a6;"></div>
<span class="t" style="left:1095.7px;top:1600.6px;font-size:19.16px;line-height:19.16px;color:#1a1a1a;font-weight:700;transform:scaleX(1.1023);-webkit-text-stroke:0.57px #1a1a1a;">-</span>
<span class="t" style="left:1251.7px;top:1600.6px;font-size:19.16px;line-height:19.16px;color:#1a1a1a;font-weight:700;transform:scaleX(1.1023);-webkit-text-stroke:0.57px #1a1a1a;">-</span>
<span class="t" style="left:1405.3px;top:1600.6px;font-size:19.16px;line-height:19.16px;color:#1a1a1a;font-weight:700;transform:scaleX(1.1023);-webkit-text-stroke:0.57px #1a1a1a;">1</span>
<span class="t" style="left:1563.7px;top:1600.6px;font-size:19.16px;line-height:19.16px;color:#1a1a1a;font-weight:700;transform:scaleX(1.1023);-webkit-text-stroke:0.57px #1a1a1a;">-</span>
<span class="t" style="left:1719.7px;top:1600.6px;font-size:19.16px;line-height:19.16px;color:#1a1a1a;font-weight:700;transform:scaleX(1.1023);-webkit-text-stroke:0.57px #1a1a1a;">-</span>
<!-- bottom -->
<div class="r" style="left:11.0px;top:1670.0px;width:2880.0px;height:49.0px;background:#0a0a0a;"></div>
<div class="r" style="left:11.0px;top:1719.0px;width:2880.0px;height:32.0px;background:#141414;"></div>
<div class="r" style="left:11.0px;top:1718.2px;width:2880.0px;height:1.0px;background:#2a2a2a;"></div>
<svg class="r" style="left:40.0px;top:1680.0px" width="20" height="26" viewBox="0 0 20 26"><path d="M14.2 6.2 L7.2 13 L14.2 19.8" fill="none" stroke="#8c8c8c" stroke-width="2" stroke-linecap="round" stroke-linejoin="round"/></svg>
<svg class="r" style="left:89.0px;top:1680.0px" width="20" height="26" viewBox="0 0 20 26"><path d="M6.8 6.2 L13.8 13 L6.8 19.8" fill="none" stroke="#cfcfcf" stroke-width="2" stroke-linecap="round" stroke-linejoin="round"/></svg>
<span class="t" style="left:190.0px;top:1685.0px;font-size:21px;line-height:21px;color:#fff;transform:scaleX(0.9827);">Contents</span>
<div class="r" style="left:291.6px;top:1679.0px;width:1.2px;height:29.0px;background:#555;"></div>
<div class="r" style="left:432.8px;top:1679.0px;width:1.2px;height:29.0px;background:#555;"></div>
<div class="r" style="left:551.9px;top:1679.0px;width:1.2px;height:29.0px;background:#555;"></div>
<div class="r" style="left:722.7px;top:1679.0px;width:1.2px;height:29.0px;background:#555;"></div>
<div class="r" style="left:824.4px;top:1679.0px;width:1.2px;height:29.0px;background:#555;"></div>
<div class="r" style="left:924.7px;top:1679.0px;width:1.2px;height:29.0px;background:#555;"></div>
<div class="r" style="left:1050.9px;top:1679.0px;width:1.2px;height:29.0px;background:#555;"></div>
<div class="r" style="left:1153.9px;top:1679.0px;width:1.2px;height:29.0px;background:#555;"></div>
<div class="r" style="left:1209.0px;top:1679.0px;width:1.2px;height:29.0px;background:#555;"></div>
<div class="r" style="left:1269.9px;top:1679.0px;width:1.2px;height:29.0px;background:#555;"></div>
<div class="r" style="left:1330.8px;top:1679.0px;width:1.2px;height:29.0px;background:#555;"></div>
<div class="r" style="left:1458.8px;top:1679.0px;width:1.2px;height:29.0px;background:#555;"></div>
<div class="r" style="left:1586.9px;top:1679.0px;width:1.2px;height:29.0px;background:#555;"></div>
<div class="r" style="left:1713.7px;top:1679.0px;width:1.2px;height:29.0px;background:#555;"></div>
<div class="r" style="left:1860.2px;top:1679.0px;width:1.2px;height:29.0px;background:#555;"></div>
<div class="r" style="left:1957.9px;top:1679.0px;width:1.2px;height:29.0px;background:#555;"></div>
<div class="r" style="left:2034.7px;top:1679.0px;width:1.2px;height:29.0px;background:#555;"></div>
<div class="r" style="left:298.8px;top:1676.0px;width:128.0px;height:36.0px;background:#fff066;border-radius:6px;"></div>
<span class="t" style="left:313.9px;top:1685.6px;font-size:20.5px;line-height:20.5px;color:#111;transform:scaleX(0.9750);">Dashboard</span>
<div class="r" style="left:440.0px;top:1676.0px;width:106.0px;height:36.0px;background:#fff066;border-radius:6px;"></div>
<span class="t" style="left:453.0px;top:1685.6px;font-size:20.5px;line-height:20.5px;color:#111;transform:scaleX(0.9750);">Revenue</span>
<div class="r" style="left:559.0px;top:1676.0px;width:157.7px;height:36.0px;background:#fff066;border-radius:6px;"></div>
<span class="t" style="left:571.0px;top:1685.6px;font-size:20.5px;line-height:20.5px;color:#111;transform:scaleX(0.9390);">COGS &amp; OPEX</span>
<div class="r" style="left:729.8px;top:1676.0px;width:88.7px;height:36.0px;background:#fff066;border-radius:6px;"></div>
<span class="t" style="left:743.6px;top:1685.6px;font-size:20.5px;line-height:20.5px;color:#111;transform:scaleX(0.9750);">Payroll</span>
<div class="r" style="left:832.0px;top:1676.0px;width:86.8px;height:36.0px;background:#fff066;border-radius:6px;"></div>
<span class="t" style="left:844.0px;top:1685.6px;font-size:20.5px;line-height:20.5px;color:#111;transform:scaleX(0.9037);">CAPEX</span>
<div class="r" style="left:932.0px;top:1676.0px;width:113.0px;height:36.0px;background:#fff066;border-radius:6px;"></div>
<span class="t" style="left:946.3px;top:1685.6px;font-size:20.5px;line-height:20.5px;color:#111;transform:scaleX(0.9750);">CapTable</span>
<div class="r" style="left:1058.0px;top:1676.0px;width:90.0px;height:36.0px;background:#fff066;border-radius:6px;"></div>
<span class="t" style="left:1071.9px;top:1685.6px;font-size:20.5px;line-height:20.5px;color:#111;transform:scaleX(0.9750);">Capital</span>
<div class="r" style="left:1161.0px;top:1676.0px;width:42.0px;height:36.0px;background:#4bb3e8;border-radius:6px;"></div>
<span class="t" style="left:1173.0px;top:1685.6px;font-size:20.5px;line-height:20.5px;color:#111;transform:scaleX(0.9294);">IS</span>
<div class="r" style="left:1215.8px;top:1676.0px;width:48.2px;height:36.0px;background:#4bb3e8;border-radius:6px;"></div>
<span class="t" style="left:1227.8px;top:1685.6px;font-size:20.5px;line-height:20.5px;color:#111;transform:scaleX(0.8855);">CF</span>
<div class="r" style="left:1277.0px;top:1676.0px;width:48.0px;height:36.0px;background:#4bb3e8;border-radius:6px;"></div>
<span class="t" style="left:1289.0px;top:1685.6px;font-size:20.5px;line-height:20.5px;color:#111;transform:scaleX(0.8777);">BS</span>
<div class="r" style="left:1338.0px;top:1676.0px;width:115.0px;height:36.0px;background:#4bb3e8;border-radius:6px;"></div>
<span class="t" style="left:1351.1px;top:1685.6px;font-size:20.5px;line-height:20.5px;color:#111;transform:scaleX(0.9750);">Scenarios</span>
<div class="r" style="left:1466.0px;top:1676.0px;width:115.0px;height:36.0px;background:#4bb3e8;border-radius:6px;"></div>
<span class="t" style="left:1482.6px;top:1685.6px;font-size:20.5px;line-height:20.5px;color:#111;transform:scaleX(0.9750);">Valuation</span>
<div class="r" style="left:1594.0px;top:1676.0px;width:113.7px;height:36.0px;background:#4bb3e8;border-radius:6px;"></div>
<span class="t" style="left:1608.1px;top:1685.6px;font-size:20.5px;line-height:20.5px;color:#111;transform:scaleX(0.9750);">Summary</span>
<div class="r" style="left:1720.8px;top:1676.0px;width:48.2px;height:36.0px;background:#4bb3e8;border-radius:6px;"></div>
<span class="t" style="left:1732.8px;top:1685.6px;font-size:20.5px;line-height:20.5px;color:#111;transform:scaleX(0.8850);">BE</span>
<div class="r" style="left:1866.9px;top:1676.0px;width:85.1px;height:36.0px;background:#4bb3e8;border-radius:6px;"></div>
<span class="t" style="left:1880.0px;top:1685.6px;font-size:20.5px;line-height:20.5px;color:#111;transform:scaleX(0.9750);">Charts</span>
<div class="r" style="left:1965.0px;top:1676.0px;width:64.0px;height:36.0px;background:#4bb3e8;border-radius:6px;"></div>
<span class="t" style="left:1977.0px;top:1685.6px;font-size:20.5px;line-height:20.5px;color:#111;transform:scaleX(0.9240);">KPIs</span>
<div class="r" style="left:2042.2px;top:1676px;width:29.5px;height:36px;overflow:hidden"><div class="r" style="left:0;top:0;width:110px;height:36px;background:#4bb3e8;border-radius:6px"></div><span class="t" style="left:12.0px;top:9.6px;font-size:20.5px;line-height:20.5px;color:#111;">Scenarios</span></div>
<div class="r" style="left:1781.8px;top:1670px;width:72px;height:42.6px;border-radius:0 0 8px 8px;background:linear-gradient(#ffffff 55%,#d8e8f2)"></div>
<span class="t" style="left:1793.8px;top:1681.5px;font-size:20.5px;line-height:20.5px;color:#111;transform:scaleX(0.9366);">ROIC</span>
<div class="r" style="left:1793.0px;top:1704.5px;width:49.0px;height:3.0px;background:#1e7145;"></div>
<div class="r" style="left:1775.8px;top:1670.0px;width:6.0px;height:6.0px;background:#fff;"></div>
<div class="r" style="left:1775.8px;top:1670.0px;width:6.0px;height:6.0px;background:#0a0a0a;border-top-right-radius:6px;"></div>
<div class="r" style="left:1853.8px;top:1670.0px;width:6.0px;height:6.0px;background:#fff;"></div>
<div class="r" style="left:1853.8px;top:1670.0px;width:6.0px;height:6.0px;background:#0a0a0a;border-top-left-radius:6px;"></div>
<div class="r" style="left:2086.6px;top:1690.8px;width:4.0px;height:4.0px;background:#e8e8e8;border-radius:2px;"></div>
<div class="r" style="left:2093.2px;top:1690.8px;width:4.0px;height:4.0px;background:#e8e8e8;border-radius:2px;"></div>
<div class="r" style="left:2099.8px;top:1690.8px;width:4.0px;height:4.0px;background:#e8e8e8;border-radius:2px;"></div>
<div class="r" style="left:2134.5px;top:1692.3px;width:17.0px;height:2.0px;background:#e8e8e8;"></div>
<div class="r" style="left:2142.0px;top:1684.8px;width:2.0px;height:17.0px;background:#e8e8e8;"></div>
<div class="r" style="left:2190.1px;top:1684.9px;width:3.6px;height:3.6px;background:#e8e8e8;border-radius:1px;"></div>
<div class="r" style="left:2190.1px;top:1692.2px;width:3.6px;height:3.6px;background:#e8e8e8;border-radius:1px;"></div>
<div class="r" style="left:2190.1px;top:1699.5px;width:3.6px;height:3.6px;background:#e8e8e8;border-radius:1px;"></div>
<div class="r" style="left:2216.0px;top:1679.0px;width:643.0px;height:28.0px;background:#161616;border-radius:14px;"></div>
<svg class="r" style="left:2221.0px;top:1685.0px" width="16" height="16" viewBox="0 0 16 16"><path d="M12 2 L2.5 8 L12 14 Z" fill="#9b9b9b" stroke="#9b9b9b" stroke-width="1.5" stroke-linejoin="round"/></svg>
<svg class="r" style="left:2839.0px;top:1685.0px" width="16" height="16" viewBox="0 0 16 16"><path d="M4 2 L13.5 8 L4 14 Z" fill="#9b9b9b" stroke="#9b9b9b" stroke-width="1.5" stroke-linejoin="round"/></svg>
<div class="r" style="left:2242.0px;top:1687.0px;width:552.0px;height:12.0px;background:#9b9b9b;border-radius:6px;"></div>
<div class="r" style="left:2860.0px;top:278.0px;width:31.0px;height:1392.0px;background:#0a0a0a;"></div>
<div class="r" style="left:2862.0px;top:281.0px;width:27.0px;height:1387.0px;background:#161616;border-radius:14px;"></div>
<svg class="r" style="left:2868.0px;top:284.0px" width="16" height="14" viewBox="0 0 16 14"><path d="M2 12 L8 2.5 L14 12 Z" fill="#9b9b9b" stroke="#9b9b9b" stroke-width="1.5" stroke-linejoin="round"/></svg>
<svg class="r" style="left:2868.0px;top:1652.0px" width="16" height="14" viewBox="0 0 16 14"><path d="M2 2 L8 11.5 L14 2 Z" fill="#9b9b9b" stroke="#9b9b9b" stroke-width="1.5" stroke-linejoin="round"/></svg>
<div class="r" style="left:2870.0px;top:304.0px;width:12.0px;height:1335.0px;background:#9b9b9b;border-radius:6px;"></div>
<span class="t" style="left:27.0px;top:1728.0px;font-size:15.5px;line-height:15.5px;color:#eee;transform:scaleX(0.9485);">Ready</span>
<svg class="r" style="left:98.0px;top:1724.0px" width="26" height="24" viewBox="0 0 26 24"><g fill="none" stroke="#ececec" stroke-width="1.9"><path d="M2 3.2 H22 V8.5"/><path d="M2 6.8 H22" stroke-width="1.6"/><path d="M2 2.3 V19.8 H9.5"/><path d="M5 11 H10.5 M5 15 H8.5" stroke-width="1.6"/><circle cx="15.8" cy="14.6" r="5.6"/><circle cx="15.8" cy="14.6" r="2.4" fill="#ececec" stroke="none"/></g></svg>
<svg class="r" style="left:145.0px;top:1722.0px" width="26" height="26" viewBox="0 0 26 26"><g fill="none" stroke-linecap="round" stroke-linejoin="round"><path d="M10 8.2 C6 8 3.5 6.8 1.8 5.2 M10 8.2 C14 8 16.5 6.8 18.2 5.2 M10 8 V13.5 M10 13.5 L5 21.5 M10 13.5 L12.2 16.8" stroke="#f0f0f0" stroke-width="4.6"/><path d="M10 8.2 C6 8 3.5 6.8 1.8 5.2 M10 8.2 C14 8 16.5 6.8 18.2 5.2 M10 8 V13.5 M10 13.5 L5 21.5 M10 13.5 L12.2 16.8" stroke="#141414" stroke-width="1.5"/><circle cx="10" cy="4" r="2.5" stroke="#f0f0f0" stroke-width="1.6" fill="#141414"/><path d="M13.5 15.5 L21.5 23 M21.5 15.5 L13.5 23" stroke="#f0f0f0" stroke-width="1.7"/></g></svg>
<span class="t" style="left:173.5px;top:1728.8px;font-size:14.76px;line-height:14.76px;color:#fff;font-weight:700;transform:scaleX(1.0631);-webkit-text-stroke:0.37px #fff;">Accessibility: Investigate</span>
<div class="r" style="left:2445.0px;top:1720.0px;width:59.0px;height:31.0px;background:#1f1f1f;"></div>
<svg class="r" style="left:2462.0px;top:1722.0px" width="24" height="24" viewBox="0 0 24 24"><g fill="none" stroke="#f0f0f0" stroke-width="2"><rect x="3" y="3" width="18" height="18"/><path d="M9 3 V21 M15 3 V21 M3 9 H21 M3 15 H21"/></g></svg>
<svg class="r" style="left:2522.5px;top:1722.0px" width="24" height="24" viewBox="0 0 24 24"><g fill="none" stroke="#f0f0f0" stroke-width="2"><rect x="3" y="3" width="18" height="18"/><rect x="7.5" y="7" width="9" height="10"/><path d="M9.5 10 H14.5 M9.5 12.5 H14.5 M9.5 15 H14.5" stroke-width="1.1"/></g></svg>
<svg class="r" style="left:2582.0px;top:1722.0px" width="24" height="24" viewBox="0 0 24 24"><g fill="none" stroke="#f0f0f0" stroke-width="2"><rect x="3" y="3" width="18" height="18"/><path d="M8 3 V12 H16 V3 M3 12 H8"/></g></svg>
<div class="r" style="left:2633.0px;top:1734.8px;width:11.5px;height:1.4px;background:#ddd;"></div>
<div class="r" style="left:2653.0px;top:1734.7px;width:147.5px;height:1.8px;background:#b5b5b5;"></div>
<div class="r" style="left:2727.0px;top:1726.5px;width:8.8px;height:16.7px;background:#b8b8b8;border-radius:1.5px;"></div>
<div class="r" style="left:2809.0px;top:1735.0px;width:11.5px;height:1.4px;background:#ddd;"></div>
<div class="r" style="left:2814.0px;top:1729.8px;width:1.4px;height:11.7px;background:#ddd;"></div>
<span class="t" style="left:2839.0px;top:1728.0px;font-size:15.5px;line-height:15.5px;color:#eee;transform:scaleX(1.0090);">120%</span>
<!-- top -->
<svg class="r" style="left:35.0px;top:35.0px" width="24" height="24" viewBox="0 0 24 24"><rect x="6" y="0.5" width="17.5" height="23" rx="2" fill="#21a366"/><rect x="6" y="0.5" width="8.8" height="7.7" fill="#33c481"/><rect x="14.8" y="0.5" width="8.7" height="7.7" rx="0" fill="#9ee88a"/><rect x="14.8" y="8.2" width="8.7" height="7.7" fill="#21a366"/><rect x="6" y="8.2" width="8.8" height="7.7" fill="#107c41"/><rect x="6" y="15.9" width="17.5" height="7.6" rx="1" fill="#185c37"/><rect x="0.5" y="5.5" width="13" height="13" rx="1.3" fill="#107c41"/><path d="M4 8.5 L6.2 8.5 L7.2 11 L8.3 8.5 L10.4 8.5 L8.3 12 L10.5 15.5 L8.3 15.5 L7.1 13 L6 15.5 L3.8 15.5 L6 12 Z" fill="#fff"/></svg>
<span class="t" style="left:95.3px;top:41.0px;font-size:15.9px;line-height:15.9px;color:#fff;transform:scaleX(1.1391);">online-marketplace-for-goods-products.xlsx  -  Read-Only</span>
<svg class="r" style="left:561.5px;top:39.7px" width="16.6" height="16.6" viewBox="-8.3 -8.3 16.6 16.6"><path d="M-6.3 -2.835 L0 3.4650000000000003 L6.3 -2.835" fill="none" stroke="#fff" stroke-width="1.9" stroke-linecap="round" stroke-linejoin="round"/></svg>
<svg class="r" style="left:2472.0px;top:33.0px" width="28" height="28" viewBox="0 0 28 28"><g fill="none" stroke="#fff" stroke-width="1.5" stroke-linecap="round"><circle cx="17" cy="10.5" r="6.5"/><path d="M12.3 15.2 L4 23.5"/></g></svg>
<svg class="r" style="left:2553.0px;top:28.8px" width="36.4" height="36.4" viewBox="0 0 36.4 36.4"><defs><clipPath id="av"><circle cx="18.2" cy="18.2" r="18.1"/></clipPath><filter id="avb" x="-10%" y="-10%" width="120%" height="120%"><feGaussianBlur stdDeviation="0.75"/></filter></defs><g clip-path="url(#av)"><g filter="url(#avb)"><rect x="-2" y="-2" width="41" height="41" fill="#a9d4d6"/><rect x="-2" y="-2" width="41" height="13" fill="#b3c1e6"/><rect x="-2" y="3" width="41" height="3.5" fill="#d3daf0"/><rect x="-2" y="10.3" width="41" height="1.4" fill="#93add0"/><path d="M3 38 C5 30 10 28.3 13 28 H23.5 C27 28.3 31.5 30 33.5 38 Z" fill="#dcd2cb"/><path d="M13 27 H23.5 L21 38 H15.5 Z" fill="#9b7464"/><ellipse cx="18.4" cy="17.6" rx="7.6" ry="10.6" fill="#b18b7b"/><path d="M18.4 7 C23.5 7 26 12 26 17.6 C26 23 23.5 28.2 18.4 28.2 Z" fill="#94705f" opacity="0.55"/><ellipse cx="18.4" cy="9.6" rx="6.3" ry="2.6" fill="#8f786e" opacity="0.7"/></g></g></svg>
<svg class="r" style="left:2628.0px;top:33.0px" width="26" height="26" viewBox="0 0 26 26"><g fill="none" stroke="#fff" stroke-width="1.4" stroke-linejoin="round"><path d="M6.5 3 H19.5 L24.5 9.8 L13 24 L1.5 9.8 Z"/><path d="M1.5 9.8 H24.5 M6.5 3 L9.3 9.8 L13 24 L16.7 9.8 L19.5 3 M9.3 9.8 L13 3 L16.7 9.8"/></g></svg>
<div class="r" style="left:2703.0px;top:45.3px;width:16.0px;height:1.5px;background:#fff;"></div>
<svg class="r" style="left:2773.0px;top:37.0px" width="20" height="20" viewBox="0 0 20 20"><g fill="none" stroke="#fff" stroke-width="1.5"><rect x="2.5" y="6.5" width="11" height="11" rx="2.2"/><path d="M6.5 6 V5 A2.2 2.2 0 0 1 8.7 2.8 H15 A2.2 2.2 0 0 1 17.2 5 V11.3 A2.2 2.2 0 0 1 15 13.5 H14"/></g></svg>
<svg class="r" style="left:2845.0px;top:37.5px" width="20" height="20" viewBox="0 0 20 20"><path d="M2.5 2.5 L17.5 17.5 M17.5 2.5 L2.5 17.5" stroke="#fff" stroke-width="1.6" fill="none" stroke-linecap="round"/></svg>
<span class="t" style="left:42.4px;top:97.6px;font-size:19px;line-height:19px;color:#fff;transform:scaleX(0.9602);">File</span>
<span class="t" style="left:198.0px;top:97.6px;font-size:19px;line-height:19px;color:#fff;transform:scaleX(0.9849);">Insert</span>
<span class="t" style="left:277.0px;top:97.6px;font-size:19px;line-height:19px;color:#fff;transform:scaleX(1.0262);">Draw</span>
<span class="t" style="left:353.0px;top:97.6px;font-size:19px;line-height:19px;color:#fff;transform:scaleX(0.9879);">Page Layout</span>
<span class="t" style="left:491.0px;top:97.6px;font-size:19px;line-height:19px;color:#fff;transform:scaleX(1.0103);">Formulas</span>
<span class="t" style="left:600.0px;top:97.6px;font-size:19px;line-height:19px;color:#fff;">Data</span>
<span class="t" style="left:671.0px;top:97.6px;font-size:19px;line-height:19px;color:#fff;transform:scaleX(0.9631);">Review</span>
<span class="t" style="left:762.0px;top:97.6px;font-size:19px;line-height:19px;color:#fff;">View</span>
<span class="t" style="left:834.0px;top:97.6px;font-size:19px;line-height:19px;color:#fff;transform:scaleX(1.0698);">Automate</span>
<span class="t" style="left:951.6px;top:97.6px;font-size:19px;line-height:19px;color:#fff;transform:scaleX(1.0082);">Help</span>
<span class="t" style="left:111.5px;top:97.6px;font-size:19px;line-height:19px;color:#fff;font-weight:700;transform:scaleX(1.0419);">Home</span>
<div class="r" style="left:110.8px;top:119.8px;width:57.9px;height:3.0px;background:#5fbf83;border-radius:1.5px;"></div>
<div class="r" style="left:2621.0px;top:87.2px;width:135.0px;height:35.8px;background:#2b2b2b;border:1px solid #5e5e5e;border-radius:6px;box-sizing:border-box;"></div>
<svg class="r" style="left:2627.0px;top:93.0px" width="22" height="22" viewBox="0 0 22 22"><path d="M3 3.5 H18 V14 H9 L5 17.5 V14 H3 Z" fill="none" stroke="#fff" stroke-width="1.5" stroke-linejoin="round"/></svg>
<span class="t" style="left:2652.5px;top:96.3px;font-size:19px;line-height:19px;color:#fff;transform:scaleX(1.0179);">Comments</span>
<div class="r" style="left:2768.0px;top:87.2px;width:105.0px;height:35.8px;background:#37a660;border-radius:6px;"></div>
<svg class="r" style="left:2773.0px;top:93.0px" width="22" height="22" viewBox="0 0 22 22"><g fill="none" stroke="#0d2b18" stroke-width="1.5" stroke-linejoin="round"><path d="M6 9.5 H3 V19 H16 V15"/><path d="M7.5 14.5 C8 10 11 8 14 8 V4.5 L19.5 9.5 L14 14.5 V11 C11.5 11 9.5 12 7.5 14.5 Z"/></g></svg>
<span class="t" style="left:2799.5px;top:96.3px;font-size:19px;line-height:19px;color:#0a1f12;transform:scaleX(0.9566);">Share</span>
<svg class="r" style="left:2856.3px;top:99.8px" width="11.440000000000001" height="11.440000000000001" viewBox="-5.720000000000001 -5.720000000000001 11.440000000000001 11.440000000000001"><path d="M-3.72 -1.6740000000000002 L0 2.0460000000000003 L3.72 -1.6740000000000002" fill="none" stroke="#0a1f12" stroke-width="1.9" stroke-linecap="round" stroke-linejoin="round"/></svg>
<div class="r" style="left:23.0px;top:128.0px;width:2856.0px;height:150.0px;background:#292929;border-radius:12px;"></div>
<div class="r" style="left:281.9px;top:135.0px;width:1.2px;height:134.0px;background:#555;"></div>
<div class="r" style="left:632.8px;top:135.0px;width:1.2px;height:134.0px;background:#555;"></div>
<div class="r" style="left:1082.8px;top:135.0px;width:1.2px;height:134.0px;background:#555;"></div>
<div class="r" style="left:1324.9px;top:135.0px;width:1.2px;height:134.0px;background:#555;"></div>
<div class="r" style="left:1543.7px;top:135.0px;width:1.2px;height:134.0px;background:#555;"></div>
<div class="r" style="left:1867.8px;top:135.0px;width:1.2px;height:134.0px;background:#555;"></div>
<div class="r" style="left:1962.8px;top:135.0px;width:1.2px;height:134.0px;background:#555;"></div>
<div class="r" style="left:2055.8px;top:135.0px;width:1.2px;height:134.0px;background:#555;"></div>
<span class="t" style="left:108.8px;top:255.6px;font-size:14.9px;line-height:14.9px;color:#f0f0f0;transform:scaleX(1.0614);">Clipboard</span>
<span class="t" style="left:430.0px;top:255.6px;font-size:14.9px;line-height:14.9px;color:#f0f0f0;transform:scaleX(1.0262);">Font</span>
<span class="t" style="left:810.0px;top:255.6px;font-size:14.9px;line-height:14.9px;color:#f0f0f0;transform:scaleX(1.0715);">Alignment</span>
<span class="t" style="left:1163.0px;top:255.6px;font-size:14.9px;line-height:14.9px;color:#f0f0f0;transform:scaleX(1.0642);">Number</span>
<span class="t" style="left:1418.0px;top:255.6px;font-size:14.9px;line-height:14.9px;color:#f0f0f0;transform:scaleX(0.9663);">Cells</span>
<span class="t" style="left:1682.0px;top:255.6px;font-size:14.9px;line-height:14.9px;color:#f0f0f0;transform:scaleX(1.0535);">Editing</span>
<span class="t" style="left:1888.0px;top:255.6px;font-size:14.9px;line-height:14.9px;color:#f0f0f0;transform:scaleX(1.0589);">Add-ins</span>
<svg class="r" style="left:263.6px;top:256.5px" width="14" height="14" viewBox="0 0 14 14"><g fill="none" stroke="#e8e8e8" stroke-width="1.3"><path d="M1.5 9 V1.5 H9"/><path d="M5 5 L12 12 M12 6.5 V12 H6.5"/></g></svg>
<svg class="r" style="left:614.3px;top:256.5px" width="14" height="14" viewBox="0 0 14 14"><g fill="none" stroke="#e8e8e8" stroke-width="1.3"><path d="M1.5 9 V1.5 H9"/><path d="M5 5 L12 12 M12 6.5 V12 H6.5"/></g></svg>
<svg class="r" style="left:1064.5px;top:256.5px" width="14" height="14" viewBox="0 0 14 14"><g fill="none" stroke="#e8e8e8" stroke-width="1.3"><path d="M1.5 9 V1.5 H9"/><path d="M5 5 L12 12 M12 6.5 V12 H6.5"/></g></svg>
<svg class="r" style="left:1306.3px;top:256.5px" width="14" height="14" viewBox="0 0 14 14"><g fill="none" stroke="#e8e8e8" stroke-width="1.3"><path d="M1.5 9 V1.5 H9"/><path d="M5 5 L12 12 M12 6.5 V12 H6.5"/></g></svg>
<svg class="r" style="left:2849.0px;top:249.0px" width="17.0" height="17.0" viewBox="-8.5 -8.5 17.0 17.0"><path d="M-6.5 -2.9250000000000003 L0 3.575 L6.5 -2.9250000000000003" fill="none" stroke="#fff" stroke-width="1.6" stroke-linecap="round" stroke-linejoin="round"/></svg>
<!-- ribbon1 -->
<svg class="r" style="left:52.0px;top:138.0px" width="48" height="50" viewBox="0 0 48 50"><g fill="none" stroke="#8f8f8f" stroke-width="2.6"><path d="M13 8.5 H5 V42.5 H22"/><path d="M30 8.5 H37 V20"/><path d="M12.5 12 V7.5 H16.5 C16.5 2 25.5 2 25.5 7.5 H29.5 V12 Z" fill="#292929" stroke-width="2.2"/><rect x="24.5" y="22" width="18.5" height="24.5" fill="#292929" stroke="#a6a6a6" stroke-width="2"/></g></svg>
<span class="t" style="left:51.2px;top:196.3px;font-size:17.2px;line-height:17.2px;color:#7d7d7d;transform:scaleX(0.9322);">Paste</span>
<svg class="r" style="left:65.8px;top:220.8px" width="11.440000000000001" height="11.440000000000001" viewBox="-5.720000000000001 -5.720000000000001 11.440000000000001 11.440000000000001"><path d="M-3.72 -1.6740000000000002 L0 2.0460000000000003 L3.72 -1.6740000000000002" fill="none" stroke="#6a6a6a" stroke-width="1.9" stroke-linecap="round" stroke-linejoin="round"/></svg>
<svg class="r" style="left:112.0px;top:139.0px" width="24" height="26" viewBox="0 0 24 26"><g fill="none" stroke-width="1.4"><path d="M7.5 1.5 L15.2 19" stroke="#e0e0e0"/><path d="M16.5 1.5 L8.8 19" stroke="#e0e0e0"/><circle cx="7.3" cy="21.5" r="2.6" stroke="#3a96dd"/><circle cx="16.7" cy="21.5" r="2.6" stroke="#3a96dd"/></g></svg>
<span class="t" style="left:142.0px;top:144.3px;font-size:17.6px;line-height:17.6px;color:#f2f2f2;transform:scaleX(1.0040);">Cut</span>
<svg class="r" style="left:110.0px;top:177.0px" width="28" height="28" viewBox="0 0 28 28"><g fill="none" stroke="#d8d8d8" stroke-width="1.5" stroke-linejoin="round"><path d="M9 21.5 H2.5 V2.5 H10 L13.5 6 V8"/><path d="M11 8.5 H20 L25 13.5 V26 H11 Z"/><path d="M19.5 8.5 V14 H25"/><path d="M14.5 18 H21.5 M14.5 21.5 H21.5" stroke-width="1.2"/></g></svg>
<span class="t" style="left:142.0px;top:183.3px;font-size:17.6px;line-height:17.6px;color:#f2f2f2;transform:scaleX(1.0100);">Copy</span>
<svg class="r" style="left:209.3px;top:185.8px" width="11.440000000000001" height="11.440000000000001" viewBox="-5.720000000000001 -5.720000000000001 11.440000000000001 11.440000000000001"><path d="M-3.72 -1.6740000000000002 L0 2.0460000000000003 L3.72 -1.6740000000000002" fill="none" stroke="#f2f2f2" stroke-width="1.9" stroke-linecap="round" stroke-linejoin="round"/></svg>
<svg class="r" style="left:110.0px;top:215.0px" width="28" height="28" viewBox="0 0 28 28"><g stroke-linejoin="round"><path d="M3 16 L12 24.5 L17.5 18.5 L9 10.5 Z" fill="#f2b84b" stroke="#f2b84b" stroke-width="1"/><path d="M3 16 L9 10.5 L13 8.5 L20 15 L17.5 18.5" fill="none" stroke="#e8e8e8" stroke-width="1.5"/><path d="M15.5 10.5 L22 3.5 L25.5 6.8 L18.5 13.5" fill="none" stroke="#e8e8e8" stroke-width="1.5"/><path d="M7 15.5 L13.5 21.5" stroke="#292929" stroke-width="1.3"/></g></svg>
<span class="t" style="left:142.0px;top:221.8px;font-size:17.6px;line-height:17.6px;color:#f2f2f2;transform:scaleX(0.9922);">Format Painter</span>
<div class="r" style="left:294.8px;top:146.3px;width:180.7px;height:35.4px;background:#2d2d2d;border:1px solid #5c5c5c;border-radius:6px;box-sizing:border-box;"></div>
<span class="t" style="left:298.5px;top:156.6px;font-size:17px;line-height:17px;color:#f2f2f2;transform:scaleX(1.0666);">Tahoma</span>
<svg class="r" style="left:460.6px;top:158.6px" width="11.812000000000001" height="11.812000000000001" viewBox="-5.906000000000001 -5.906000000000001 11.812000000000001 11.812000000000001"><path d="M-3.9060000000000006 -1.7577000000000003 L0 2.1483000000000003 L3.9060000000000006 -1.7577000000000003" fill="none" stroke="#f2f2f2" stroke-width="1.9" stroke-linecap="round" stroke-linejoin="round"/></svg>
<div class="r" style="left:479.2px;top:146.3px;width:64.5px;height:35.4px;background:#2d2d2d;border:1px solid #5c5c5c;border-radius:6px;box-sizing:border-box;"></div>
<span class="t" style="left:483.0px;top:157.6px;font-size:16.8px;line-height:16.8px;color:#f2f2f2;">8</span>
<svg class="r" style="left:529.1px;top:158.6px" width="11.812000000000001" height="11.812000000000001" viewBox="-5.906000000000001 -5.906000000000001 11.812000000000001 11.812000000000001"><path d="M-3.9060000000000006 -1.7577000000000003 L0 2.1483000000000003 L3.9060000000000006 -1.7577000000000003" fill="none" stroke="#f2f2f2" stroke-width="1.9" stroke-linecap="round" stroke-linejoin="round"/></svg>
<span class="t" style="left:552.5px;top:149.5px;font-size:26.5px;line-height:26.5px;color:#d6d6d6;transform:scaleX(1.0749);">A</span>
<svg class="r" style="left:569.0px;top:152.0px" width="10" height="8" viewBox="0 0 10 8"><path d="M1.5 6 L5 2 L8.5 6" fill="none" stroke="#3a96dd" stroke-width="1.6"/></svg>
<span class="t" style="left:595.5px;top:153.5px;font-size:21px;line-height:21px;color:#d6d6d6;transform:scaleX(1.0708);">A</span>
<svg class="r" style="left:608.0px;top:152.0px" width="10" height="8" viewBox="0 0 10 8"><path d="M1.5 2 L5 6 L8.5 2" fill="none" stroke="#3a96dd" stroke-width="1.6"/></svg>
<span class="t" style="left:305.5px;top:202.6px;font-size:19.5px;line-height:19.5px;color:#d6d6d6;font-weight:700;">B</span>
<span class="t" style="left:345.5px;top:200px;font-family:'Liberation Serif',serif;font-style:italic;font-size:21px;line-height:21px;color:#d6d6d6">I</span>
<span class="t" style="left:382.4px;top:201.6px;font-size:19px;line-height:19px;color:#d6d6d6;">U</span>
<div class="r" style="left:382.0px;top:221.6px;width:14.5px;height:1.4px;background:#d6d6d6;"></div>
<svg class="r" style="left:413.5px;top:207.3px" width="11.440000000000001" height="11.440000000000001" viewBox="-5.720000000000001 -5.720000000000001 11.440000000000001 11.440000000000001"><path d="M-3.72 -1.6740000000000002 L0 2.0460000000000003 L3.72 -1.6740000000000002" fill="none" stroke="#f2f2f2" stroke-width="1.9" stroke-linecap="round" stroke-linejoin="round"/></svg>
<div class="r" style="left:433.8px;top:194.0px;width:1.2px;height:36.0px;background:#555;"></div>
<svg class="r" style="left:443.0px;top:200.0px" width="24" height="24" viewBox="0 0 24 24"><g fill="none" stroke="#d6d6d6"><path d="M1.5 22.5 H22.5" stroke-width="1.6"/><path d="M1.5 1.5 H22.5 V19 M1.5 1.5 V19 M12 1.5 V19 M1.5 10.5 H22.5" stroke-width="1.3" stroke-dasharray="1.6 1.6"/></g></svg>
<svg class="r" style="left:478.3px;top:207.3px" width="11.440000000000001" height="11.440000000000001" viewBox="-5.720000000000001 -5.720000000000001 11.440000000000001 11.440000000000001"><path d="M-3.72 -1.6740000000000002 L0 2.0460000000000003 L3.72 -1.6740000000000002" fill="none" stroke="#f2f2f2" stroke-width="1.9" stroke-linecap="round" stroke-linejoin="round"/></svg>
<div class="r" style="left:498.8px;top:194.0px;width:1.2px;height:36.0px;background:#555;"></div>
<svg class="r" style="left:508.0px;top:198.0px" width="28" height="28" viewBox="0 0 28 28"><g fill="none" stroke="#d6d6d6" stroke-width="1.5" stroke-linejoin="round"><path d="M4.5 13 L11 4.5 L17.5 11.5 L11.5 18.5 Z"/><path d="M11 4.5 V2.8 C11 1 14 1 14 2.8 V8"/><path d="M17.5 8.5 C20.5 8.5 21 11.5 20.5 14" stroke="#3a96dd" stroke-width="2"/></g><rect x="1" y="21" width="24.5" height="6" fill="#ffee00"/></svg>
<svg class="r" style="left:543.3px;top:207.3px" width="11.440000000000001" height="11.440000000000001" viewBox="-5.720000000000001 -5.720000000000001 11.440000000000001 11.440000000000001"><path d="M-3.72 -1.6740000000000002 L0 2.0460000000000003 L3.72 -1.6740000000000002" fill="none" stroke="#f2f2f2" stroke-width="1.9" stroke-linecap="round" stroke-linejoin="round"/></svg>
<span class="t" style="left:574.0px;top:199.3px;font-size:21.5px;line-height:21.5px;color:#d6d6d6;transform:scaleX(1.1158);">A</span>
<div class="r" style="left:569.5px;top:219.0px;width:25.0px;height:6.0px;background:#ff0000;"></div>
<svg class="r" style="left:604.6px;top:207.3px" width="11.440000000000001" height="11.440000000000001" viewBox="-5.720000000000001 -5.720000000000001 11.440000000000001 11.440000000000001"><path d="M-3.72 -1.6740000000000002 L0 2.0460000000000003 L3.72 -1.6740000000000002" fill="none" stroke="#f2f2f2" stroke-width="1.9" stroke-linecap="round" stroke-linejoin="round"/></svg>
<div class="r" style="left:685.0px;top:146.3px;width:35.6px;height:35.4px;background:#3a3a3a;border:1px solid #6a6a6a;border-radius:6px;box-sizing:border-box;"></div>
<svg class="r" style="left:649.8px;top:149.0px" width="28" height="28" viewBox="0 0 28 28"><path d="M3 3.5 H25" stroke="#d6d6d6" stroke-width="1.5" fill="none"/><path d="M7 9.5 H21" stroke="#d6d6d6" stroke-width="1.5" fill="none"/><path d="M3 15.5 H25" stroke="#d6d6d6" stroke-width="1.5" fill="none"/></svg>
<svg class="r" style="left:688.8px;top:149.0px" width="28" height="28" viewBox="0 0 28 28"><path d="M3 8 H25" stroke="#d6d6d6" stroke-width="1.5" fill="none"/><path d="M7 14 H21" stroke="#d6d6d6" stroke-width="1.5" fill="none"/><path d="M3 20 H25" stroke="#d6d6d6" stroke-width="1.5" fill="none"/></svg>
<svg class="r" style="left:727.7px;top:149.0px" width="28" height="28" viewBox="0 0 28 28"><path d="M3 14 H25" stroke="#d6d6d6" stroke-width="1.5" fill="none"/><path d="M7 20 H21" stroke="#d6d6d6" stroke-width="1.5" fill="none"/><path d="M3 26 H25" stroke="#d6d6d6" stroke-width="1.5" fill="none"/></svg>
<div class="r" style="left:762.7px;top:146.0px;width:1.2px;height:36.0px;background:#555;"></div>
<svg class="r" style="left:770.0px;top:148.0px" width="30" height="30" viewBox="0 0 30 30"><text x="2" y="17" font-family="Liberation Sans" font-size="13" fill="#d6d6d6" transform="rotate(-38 10 14)">ab</text><path d="M11 26 L26 11 M19 10.5 H26.5 V18" fill="none" stroke="#3a96dd" stroke-width="1.6"/></svg>
<svg class="r" style="left:804.3px;top:158.8px" width="11.440000000000001" height="11.440000000000001" viewBox="-5.720000000000001 -5.720000000000001 11.440000000000001 11.440000000000001"><path d="M-3.72 -1.6740000000000002 L0 2.0460000000000003 L3.72 -1.6740000000000002" fill="none" stroke="#f2f2f2" stroke-width="1.9" stroke-linecap="round" stroke-linejoin="round"/></svg>
<svg class="r" style="left:649.8px;top:197.0px" width="28" height="28" viewBox="0 0 28 28"><path d="M3 5 H25" stroke="#d6d6d6" stroke-width="1.5" fill="none"/><path d="M3 11 H18" stroke="#d6d6d6" stroke-width="1.5" fill="none"/><path d="M3 17 H25" stroke="#d6d6d6" stroke-width="1.5" fill="none"/><path d="M3 23 H18" stroke="#d6d6d6" stroke-width="1.5" fill="none"/></svg>
<svg class="r" style="left:688.8px;top:197.0px" width="28" height="28" viewBox="0 0 28 28"><path d="M3 5 H25" stroke="#d6d6d6" stroke-width="1.5" fill="none"/><path d="M7 11 H21" stroke="#d6d6d6" stroke-width="1.5" fill="none"/><path d="M3 17 H25" stroke="#d6d6d6" stroke-width="1.5" fill="none"/><path d="M7 23 H21" stroke="#d6d6d6" stroke-width="1.5" fill="none"/></svg>
<svg class="r" style="left:727.7px;top:197.0px" width="28" height="28" viewBox="0 0 28 28"><path d="M3 5 H25" stroke="#d6d6d6" stroke-width="1.5" fill="none"/><path d="M10 11 H25" stroke="#d6d6d6" stroke-width="1.5" fill="none"/><path d="M3 17 H25" stroke="#d6d6d6" stroke-width="1.5" fill="none"/><path d="M10 23 H25" stroke="#d6d6d6" stroke-width="1.5" fill="none"/></svg>
<div class="r" style="left:762.7px;top:194.0px;width:1.2px;height:36.0px;background:#555;"></div>
<svg class="r" style="left:770.7px;top:197.0px" width="28" height="28" viewBox="0 0 28 28"><path d="M3 5 H25" stroke="#d6d6d6" stroke-width="1.5" fill="none"/><path d="M14 11 H25" stroke="#d6d6d6" stroke-width="1.5" fill="none"/><path d="M14 17 H25" stroke="#d6d6d6" stroke-width="1.5" fill="none"/><path d="M3 23 H25" stroke="#d6d6d6" stroke-width="1.5" fill="none"/><path d="M11 14 H3.5 M7 10.5 L3.5 14 L7 17.5" fill="none" stroke="#3a96dd" stroke-width="1.6"/></svg>
<svg class="r" style="left:809.9px;top:197.0px" width="28" height="28" viewBox="0 0 28 28"><path d="M3 5 H25" stroke="#d6d6d6" stroke-width="1.5" fill="none"/><path d="M14 11 H25" stroke="#d6d6d6" stroke-width="1.5" fill="none"/><path d="M14 17 H25" stroke="#d6d6d6" stroke-width="1.5" fill="none"/><path d="M3 23 H25" stroke="#d6d6d6" stroke-width="1.5" fill="none"/><path d="M3 14 H10.5 M7 10.5 L10.5 14 L7 17.5" fill="none" stroke="#3a96dd" stroke-width="1.6"/></svg>
<div class="r" style="left:850.9px;top:144.0px;width:1.2px;height:94.0px;background:#555;"></div>
<svg class="r" style="left:868.0px;top:150.0px" width="26" height="28" viewBox="0 0 26 28"><text x="2" y="11.5" font-family="Liberation Sans" font-size="13.5" fill="#d6d6d6">ab</text><text x="2" y="24" font-family="Liberation Sans" font-size="13.5" fill="#d6d6d6">c</text><path d="M20 12.5 C24.5 14 24 21.5 18 21.5 H12.5 M16 17.5 L12 21.5 L16 25.5" fill="none" stroke="#3a96dd" stroke-width="1.7"/></svg>
<span class="t" style="left:897.4px;top:156.5px;font-size:17.6px;line-height:17.6px;color:#f2f2f2;transform:scaleX(0.9874);">Wrap Text</span>
<svg class="r" style="left:866.0px;top:200.0px" width="26" height="26" viewBox="0 0 26 26"><g fill="none" stroke="#d6d6d6" stroke-width="1.5"><rect x="1.5" y="1.5" width="22" height="21"/><path d="M12.5 1.5 V5.5 M12.5 18.5 V22.5"/></g><rect x="1.5" y="5.5" width="22" height="13" fill="none" stroke="#3a96dd" stroke-width="1.6"/><path d="M5.5 12 H19.5 M8.5 9 L5.5 12 L8.5 15 M16.5 9 L19.5 12 L16.5 15" fill="none" stroke="#3a96dd" stroke-width="1.6"/></svg>
<span class="t" style="left:897.4px;top:205.2px;font-size:17.6px;line-height:17.6px;color:#f2f2f2;transform:scaleX(1.0125);">Merge &amp; Center</span>
<svg class="r" style="left:1048.3px;top:207.3px" width="11.440000000000001" height="11.440000000000001" viewBox="-5.720000000000001 -5.720000000000001 11.440000000000001 11.440000000000001"><path d="M-3.72 -1.6740000000000002 L0 2.0460000000000003 L3.72 -1.6740000000000002" fill="none" stroke="#f2f2f2" stroke-width="1.9" stroke-linecap="round" stroke-linejoin="round"/></svg>
<div class="r" style="left:1096.3px;top:146.3px;width:217.3px;height:35.4px;background:#2d2d2d;border:1px solid #5c5c5c;border-radius:6px;box-sizing:border-box;"></div>
<span class="t" style="left:1099.8px;top:156.6px;font-size:17px;line-height:17px;color:#f2f2f2;transform:scaleX(0.9674);">General</span>
<svg class="r" style="left:1299.1px;top:158.6px" width="11.812000000000001" height="11.812000000000001" viewBox="-5.906000000000001 -5.906000000000001 11.812000000000001 11.812000000000001"><path d="M-3.9060000000000006 -1.7577000000000003 L0 2.1483000000000003 L3.9060000000000006 -1.7577000000000003" fill="none" stroke="#f2f2f2" stroke-width="1.9" stroke-linecap="round" stroke-linejoin="round"/></svg>
<span class="t" style="left:1107.2px;top:196.8px;font-size:28.5px;line-height:28.5px;color:#d6d6d6;transform:scaleX(0.7255);">$</span>
<svg class="r" style="left:1136.3px;top:207.3px" width="11.440000000000001" height="11.440000000000001" viewBox="-5.720000000000001 -5.720000000000001 11.440000000000001 11.440000000000001"><path d="M-3.72 -1.6740000000000002 L0 2.0460000000000003 L3.72 -1.6740000000000002" fill="none" stroke="#f2f2f2" stroke-width="1.9" stroke-linecap="round" stroke-linejoin="round"/></svg>
<span class="t" style="left:1163.8px;top:196.5px;font-size:30.5px;line-height:30.5px;color:#d6d6d6;transform:scaleX(0.8296);">%</span>
<span class="t" style="left:1208.5px;top:164.7px;font-family:'Liberation Serif',serif;font-weight:700;font-size:58px;line-height:58px;color:#d6d6d6">,</span>
<div class="r" style="left:1234.8px;top:194.0px;width:1.2px;height:36.0px;background:#555;"></div>
<svg class="r" style="left:1243.0px;top:199.0px" width="28" height="26" viewBox="0 0 28 26"><text x="16.5" y="11" font-family="Liberation Sans" font-size="13.5" fill="#d6d6d6">0</text><text x="9" y="23.5" font-family="Liberation Sans" font-size="13.5" fill="#d6d6d6">.00</text><path d="M13.5 7 H3 M6.5 3.5 L3 7 L6.5 10.5" fill="none" stroke="#3a96dd" stroke-width="1.6"/></svg>
<svg class="r" style="left:1281.0px;top:199.0px" width="28" height="26" viewBox="0 0 28 26"><text x="7" y="11" font-family="Liberation Sans" font-size="13.5" fill="#d6d6d6">.00</text><text x="16" y="23.5" font-family="Liberation Sans" font-size="13.5" fill="#d6d6d6">.0</text><path d="M3 19 H13.5 M10 15.5 L13.5 19 L10 22.5" fill="none" stroke="#3a96dd" stroke-width="1.6"/></svg>
<!-- ribbon2 -->
<svg class="r" style="left:1342.0px;top:138.0px" width="56" height="46" viewBox="0 0 56 46"><g fill="none" stroke="#d6d6d6" stroke-width="1.5"><rect x="7" y="8" width="41" height="32"/><path d="M21 8 V40 M34.5 8 V40 M7 18.5 H48 M7 29.5 H48"/></g><rect x="21" y="18.5" width="30" height="11" fill="#1f7fd6" stroke="#4aa3ea" stroke-width="1"/><path d="M34.5 18.5 V29.5" stroke="#4aa3ea" stroke-width="1.2"/><path d="M22 24 H4.5 M11 16.5 L4 24 L11 31.5" fill="none" stroke="#4aa3ea" stroke-width="1.8"/><path d="M6 21.8 H21 V26.2 H6" fill="#3a96dd" stroke="none"/></svg>
<span class="t" style="left:1347.0px;top:196.3px;font-size:17.6px;line-height:17.6px;color:#f2f2f2;transform:scaleX(0.9881);">Insert</span>
<svg class="r" style="left:1362.8px;top:220.8px" width="11.440000000000001" height="11.440000000000001" viewBox="-5.720000000000001 -5.720000000000001 11.440000000000001 11.440000000000001"><path d="M-3.72 -1.6740000000000002 L0 2.0460000000000003 L3.72 -1.6740000000000002" fill="none" stroke="#f2f2f2" stroke-width="1.9" stroke-linecap="round" stroke-linejoin="round"/></svg>
<svg class="r" style="left:1407.0px;top:138.0px" width="56" height="46" viewBox="0 0 56 46"><g fill="none" stroke="#d6d6d6" stroke-width="1.5"><rect x="7" y="8" width="41" height="32"/><path d="M21 8 V40 M34.5 8 V40 M7 18.5 H48 M7 29.5 H48"/></g><rect x="36" y="17" width="14" height="15" fill="#292929"/><path d="M12.5 18.5 H31 L37 24 L31 29.5 H12.5 Z" fill="#1f7fd6"/><path d="M26 18.5 V29.5" stroke="#4aa3ea" stroke-width="1.2"/><path d="M33.5 16.5 L49.5 31.5 M49.5 16.5 L33.5 31.5" stroke="#e8534f" stroke-width="1.8" fill="none"/></svg>
<span class="t" style="left:1409.3px;top:196.3px;font-size:17.6px;line-height:17.6px;color:#f2f2f2;transform:scaleX(0.9631);">Delete</span>
<svg class="r" style="left:1427.8px;top:220.8px" width="11.440000000000001" height="11.440000000000001" viewBox="-5.720000000000001 -5.720000000000001 11.440000000000001 11.440000000000001"><path d="M-3.72 -1.6740000000000002 L0 2.0460000000000003 L3.72 -1.6740000000000002" fill="none" stroke="#f2f2f2" stroke-width="1.9" stroke-linecap="round" stroke-linejoin="round"/></svg>
<svg class="r" style="left:1472.0px;top:136.0px" width="56" height="48" viewBox="0 0 56 48"><g fill="none" stroke="#d6d6d6" stroke-width="1.5"><rect x="8" y="10" width="41" height="32"/><path d="M18.7 10 V42 M39.2 10 V42 M8 20.5 H49 M8 31.5 H49"/></g><rect x="19.3" y="20.7" width="19.3" height="10.6" fill="#1f7fd6" stroke="#4aa3ea" stroke-width="1"/><path d="M17.5 4.5 H40.5 M17.5 2 V7 M40.5 2 V7" stroke="#3a96dd" stroke-width="1.5" fill="none"/></svg>
<span class="t" style="left:1472.2px;top:194.3px;font-size:17.6px;line-height:17.6px;color:#f2f2f2;transform:scaleX(1.0135);">Format</span>
<svg class="r" style="left:1493.8px;top:219.3px" width="11.440000000000001" height="11.440000000000001" viewBox="-5.720000000000001 -5.720000000000001 11.440000000000001 11.440000000000001"><path d="M-3.72 -1.6740000000000002 L0 2.0460000000000003 L3.72 -1.6740000000000002" fill="none" stroke="#f2f2f2" stroke-width="1.9" stroke-linecap="round" stroke-linejoin="round"/></svg>
<svg class="r" style="left:1564.0px;top:139.5px" width="22" height="25" viewBox="0 0 22 25"><path d="M18.5 6 V2.5 H3.5 L11.5 12.5 L3.5 22.5 H18.5 V19" fill="none" stroke="#d6d6d6" stroke-width="1.6"/></svg>
<span class="t" style="left:1593.4px;top:144.5px;font-size:17.6px;line-height:17.6px;color:#f2f2f2;transform:scaleX(1.0083);">AutoSum</span>
<svg class="r" style="left:1693.3px;top:147.3px" width="11.440000000000001" height="11.440000000000001" viewBox="-5.720000000000001 -5.720000000000001 11.440000000000001 11.440000000000001"><path d="M-3.72 -1.6740000000000002 L0 2.0460000000000003 L3.72 -1.6740000000000002" fill="none" stroke="#f2f2f2" stroke-width="1.9" stroke-linecap="round" stroke-linejoin="round"/></svg>
<svg class="r" style="left:1562.0px;top:179.0px" width="26" height="24" viewBox="0 0 26 24"><g fill="none" stroke="#d6d6d6" stroke-width="1.5"><rect x="1.5" y="1.5" width="22" height="20"/><path d="M1.5 4.5 H23.5"/></g><path d="M12.5 7.5 V17.5 M8.5 13.5 L12.5 17.5 L16.5 13.5" fill="none" stroke="#3a96dd" stroke-width="1.6"/></svg>
<span class="t" style="left:1593.4px;top:183.3px;font-size:17.6px;line-height:17.6px;color:#f2f2f2;transform:scaleX(0.9120);">Fill</span>
<svg class="r" style="left:1618.8px;top:185.5px" width="11.068" height="11.068" viewBox="-5.534 -5.534 11.068 11.068"><path d="M-3.534 -1.5903 L0 1.9437 L3.534 -1.5903" fill="none" stroke="#f2f2f2" stroke-width="1.9" stroke-linecap="round" stroke-linejoin="round"/></svg>
<svg class="r" style="left:1561.0px;top:217.0px" width="28" height="26" viewBox="0 0 28 26"><path d="M2.5 15 L16 2.5 L24.5 11 L11 23.5 Z" fill="none" stroke="#c463d6" stroke-width="1.6" stroke-linejoin="round"/><path d="M2.5 15 L6.5 11.3 L15 19.8 L11 23.5 Z" fill="#b045c4" stroke="#c463d6" stroke-width="1.2" stroke-linejoin="round"/></svg>
<span class="t" style="left:1593.4px;top:222.3px;font-size:17.6px;line-height:17.6px;color:#f2f2f2;transform:scaleX(0.9225);">Clear</span>
<svg class="r" style="left:1636.8px;top:224.5px" width="11.068" height="11.068" viewBox="-5.534 -5.534 11.068 11.068"><path d="M-3.534 -1.5903 L0 1.9437 L3.534 -1.5903" fill="none" stroke="#f2f2f2" stroke-width="1.9" stroke-linecap="round" stroke-linejoin="round"/></svg>
<svg class="r" style="left:1727.0px;top:138.0px" width="48" height="46" viewBox="0 0 48 46"><text x="1.5" y="22.5" font-family="Liberation Sans" font-size="25.5" fill="#3a96dd">A</text><text x="2" y="43.5" font-family="Liberation Sans" font-size="25" fill="#d6d6d6" textLength="14" lengthAdjust="spacingAndGlyphs">Z</text><path d="M22 14.5 H45 L36.5 25.5 V37 H30.5 V25.5 Z" fill="none" stroke="#d6d6d6" stroke-width="1.6" stroke-linejoin="round"/></svg>
<span class="t" style="left:1724.8px;top:194.3px;font-size:17.6px;line-height:17.6px;color:#f2f2f2;transform:scaleX(1.0632);">Sort &amp;</span>
<span class="t" style="left:1724.0px;top:218.2px;font-size:17.6px;line-height:17.6px;color:#f2f2f2;transform:scaleX(0.9715);">Filter</span>
<svg class="r" style="left:1767.0px;top:219.5px" width="11.068" height="11.068" viewBox="-5.534 -5.534 11.068 11.068"><path d="M-3.534 -1.5903 L0 1.9437 L3.534 -1.5903" fill="none" stroke="#f2f2f2" stroke-width="1.9" stroke-linecap="round" stroke-linejoin="round"/></svg>
<svg class="r" style="left:1795.0px;top:138.0px" width="50" height="50" viewBox="0 0 50 50"><g fill="none" stroke="#d6d6d6" stroke-width="1.7" stroke-linecap="round"><circle cx="31.5" cy="18.5" r="15"/><path d="M21 29.5 L4 46"/></g></svg>
<span class="t" style="left:1795.0px;top:194.3px;font-size:17.6px;line-height:17.6px;color:#f2f2f2;transform:scaleX(1.0418);">Find &amp;</span>
<span class="t" style="left:1790.0px;top:218.2px;font-size:17.6px;line-height:17.6px;color:#f2f2f2;transform:scaleX(0.9403);">Select</span>
<svg class="r" style="left:1841.8px;top:219.5px" width="11.068" height="11.068" viewBox="-5.534 -5.534 11.068 11.068"><path d="M-3.534 -1.5903 L0 1.9437 L3.534 -1.5903" fill="none" stroke="#f2f2f2" stroke-width="1.9" stroke-linecap="round" stroke-linejoin="round"/></svg>
<svg class="r" style="left:1893.0px;top:139.0px" width="46" height="46" viewBox="0 0 46 46"><rect x="2" y="2" width="41.5" height="41.5" fill="#5a2a17" stroke="#cf5a2e" stroke-width="1.6"/><g fill="#292929" stroke="#cf5a2e" stroke-width="1.5"><rect x="7.3" y="7.3" width="13" height="13"/><rect x="25.2" y="7.3" width="13" height="13"/><rect x="7.3" y="25.2" width="13" height="13"/><rect x="25.2" y="25.2" width="13" height="13"/></g></svg>
<span class="t" style="left:1885.5px;top:194.3px;font-size:17.6px;line-height:17.6px;color:#f2f2f2;transform:scaleX(1.0389);">Add-ins</span>
<svg class="r" style="left:1987.0px;top:139.0px" width="46" height="46" viewBox="0 0 46 46"><g fill="none" stroke="#b8b8b8" stroke-width="1.4"><rect x="2" y="2.5" width="41" height="40.5"/><path d="M2 5 H43" stroke-width="3"/><path d="M2 15 H10 M2 24.5 H12 M2 34 H43 M16 34 V43 M29.5 34 V43 M36 15 H43 M34 24.5 H43"/></g><circle cx="23" cy="20" r="13.5" fill="#292929" stroke="#d6d6d6" stroke-width="1.6"/><path d="M32.5 29.5 L43.5 41.5" stroke="#d6d6d6" stroke-width="1.8"/><rect x="14.5" y="18" width="4" height="8" fill="#8a8a8a"/><rect x="19.5" y="13" width="4" height="13" fill="none" stroke="#d6d6d6" stroke-width="1.2"/><rect x="25" y="15.5" width="4" height="10.5" fill="#1f7fd6"/></svg>
<span class="t" style="left:1980.0px;top:194.3px;font-size:17.6px;line-height:17.6px;color:#f2f2f2;transform:scaleX(0.9742);">Analyze</span>
<span class="t" style="left:1992.5px;top:218.2px;font-size:17.6px;line-height:17.6px;color:#f2f2f2;transform:scaleX(0.9683);">Data</span>
<svg class="r" style="left:2150.0px;top:136.0px" width="520" height="126" viewBox="0 0 520 126"><circle cx="62.3" cy="62.6" r="56" fill="#fff"/><rect x="31.7" y="37.2" width="61" height="52.2" fill="#5b63ea"/>
<rect x="40.5" y="44.7" width="18.5" height="14.7" fill="#fff"/><rect x="66.2" y="44.7" width="18.5" height="14.7" fill="#fff"/><rect x="40.5" y="67.5" width="18.5" height="14.4" fill="#fff"/><rect x="66.2" y="67.5" width="18.5" height="14.4" fill="#fff"/></svg>
<!-- logo -->
<span class="t" style="left:2294.3px;top:157.0px;font-size:48.01px;line-height:48.01px;color:#fff;font-weight:700;transform:scaleX(1.0185);-webkit-text-stroke:1.44px #fff;">FINM</span>
<span class="t" style="left:2449.3px;top:157.0px;font-size:48.01px;line-height:48.01px;color:#fff;font-weight:700;transform:scaleX(0.8932);-webkit-text-stroke:1.44px #fff;">DELSLAB</span>
<svg class="r" style="left:2410.0px;top:150.0px" width="44" height="52" viewBox="0 0 44 52"><circle cx="21.5" cy="30" r="13.2" fill="none" stroke="#fff" stroke-width="8.2"/><rect x="16.3" y="0" width="10.4" height="31" fill="#292929"/><rect x="18.7" y="4.5" width="5.6" height="25" rx="2.8" fill="#fff"/><circle cx="21.5" cy="7" r="3.6" fill="#fff"/></svg>
<span class="t" style="left:2294.5px;top:209.7px;font-size:32.75px;line-height:32.75px;color:#fff;-webkit-text-stroke:0.72px #fff;">T</span>
<span class="t" style="left:2338.0px;top:209.7px;font-size:32.75px;line-height:32.75px;color:#fff;-webkit-text-stroke:0.72px #fff;">e</span>
<span class="t" style="left:2379.5px;top:209.7px;font-size:32.75px;line-height:32.75px;color:#fff;-webkit-text-stroke:0.72px #fff;">m</span>
<span class="t" style="left:2436.5px;top:209.7px;font-size:32.75px;line-height:32.75px;color:#fff;-webkit-text-stroke:0.72px #fff;">p</span>
<span class="t" style="left:2481.5px;top:209.7px;font-size:32.75px;line-height:32.75px;color:#fff;-webkit-text-stroke:0.72px #fff;">l</span>
<span class="t" style="left:2511.5px;top:209.7px;font-size:32.75px;line-height:32.75px;color:#fff;-webkit-text-stroke:0.72px #fff;">a</span>
<span class="t" style="left:2556.5px;top:209.7px;font-size:32.75px;line-height:32.75px;color:#fff;-webkit-text-stroke:0.72px #fff;">t</span>
<span class="t" style="left:2590.5px;top:209.7px;font-size:32.75px;line-height:32.75px;color:#fff;-webkit-text-stroke:0.72px #fff;">e</span>
<span class="t" style="left:2633.0px;top:209.7px;font-size:32.75px;line-height:32.75px;color:#fff;-webkit-text-stroke:0.72px #fff;">s</span>
</body></html>
